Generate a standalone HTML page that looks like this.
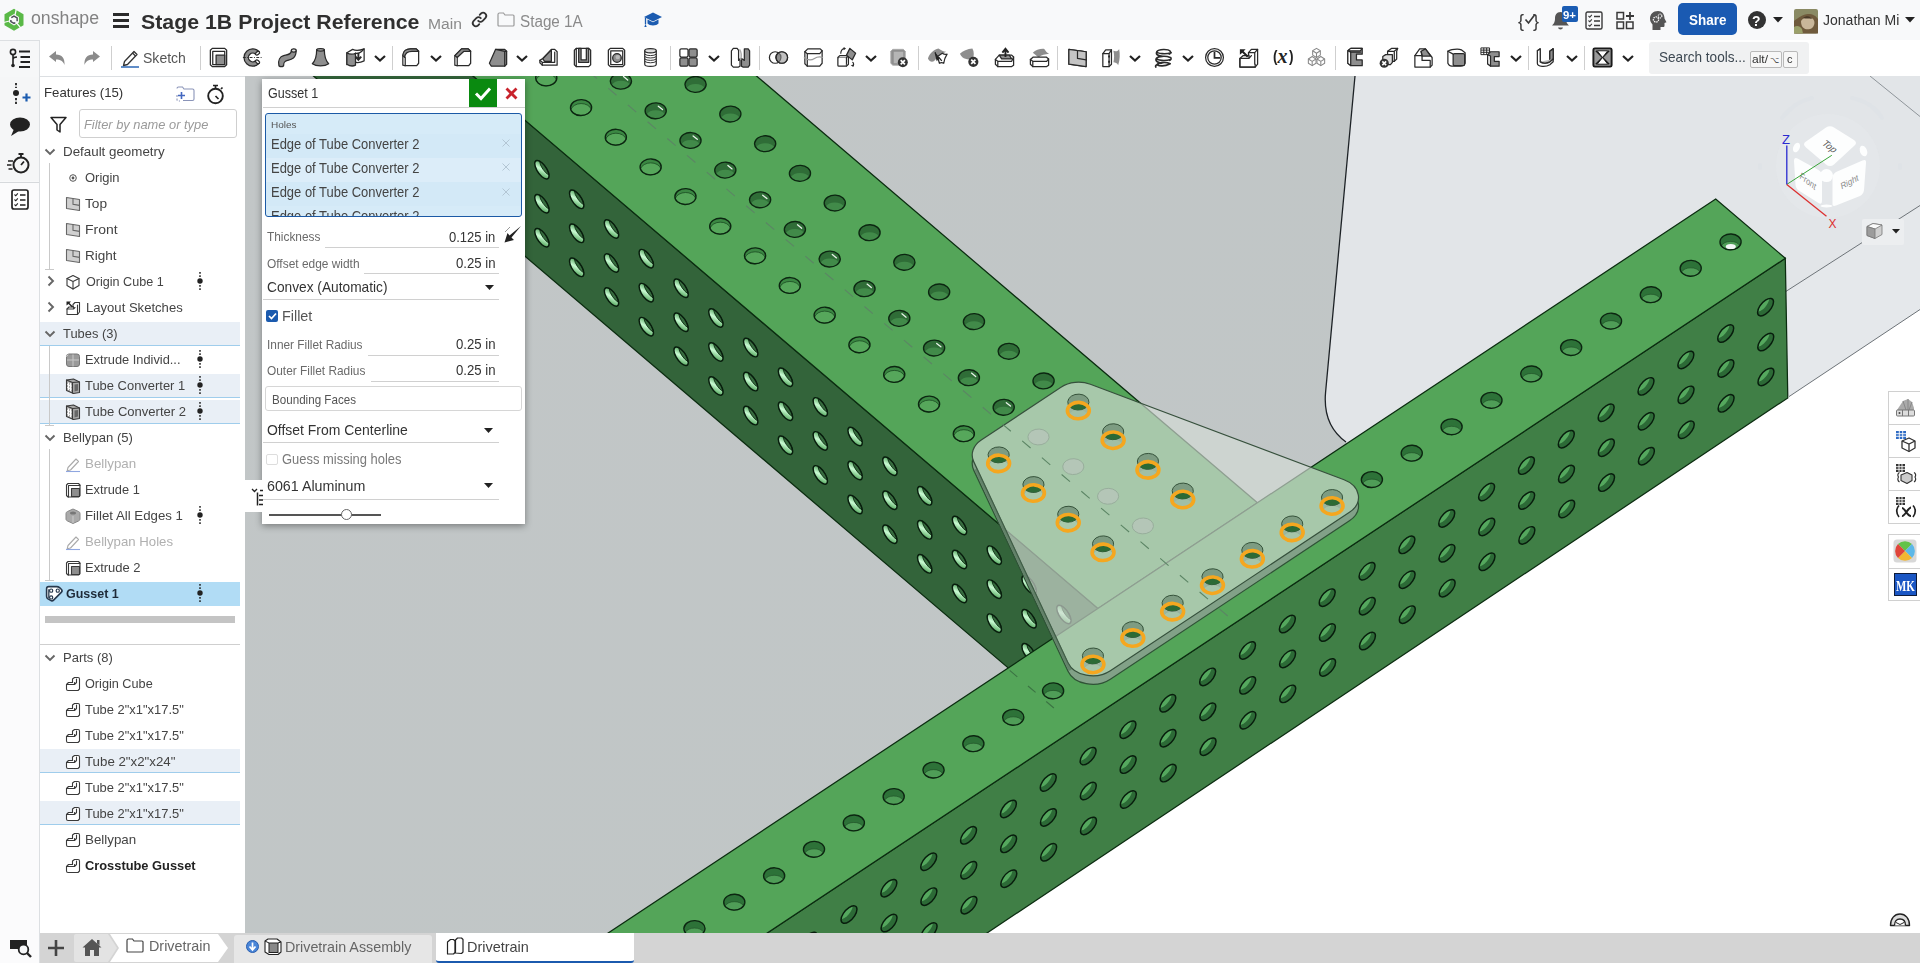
<!DOCTYPE html>
<html lang="en"><head><meta charset="utf-8"><title>Stage 1B Project Reference | Drivetrain - Onshape</title>
<style>*{box-sizing:border-box}
html,body{margin:0;padding:0}
body{width:1920px;height:963px;overflow:hidden;background:#fff;font-family:"Liberation Sans",sans-serif;font-size:13px;color:#333}
#app{position:relative;width:1920px;height:963px;overflow:hidden;background:#fff}
.t{position:absolute;white-space:nowrap;transform-origin:0 50%;display:block}
.abs,.ic{position:absolute;display:block}
svg{display:block;overflow:visible}
#viewport{position:absolute;left:245px;top:76px;width:1675px;height:857px;overflow:hidden;background:#c1c6c7}
#scene{position:absolute;left:0;top:0}
#scene circle,#scene path,#scene polygon,#scene ellipse{vector-effect:non-scaling-stroke}
#topbar{position:absolute;left:0;top:0;width:1920px;height:40px;background:#f8f9fa}
#toolbar{position:absolute;left:40px;top:40px;width:1880px;height:36px;background:#fff}
#toolbar .sep{position:absolute;top:6px;width:1px;height:24px;background:#cfcfcf}
#leftbar{position:absolute;left:0;top:40px;width:40px;height:923px;background:linear-gradient(#f5f6f7 0,#f5f6f7 141px,#fbfbfc 142px);border-right:1px solid #dcdfe2}
#leftbar .tab{position:absolute;left:0;top:0;width:40px;height:37px;background:#f6f7f8;border-top:1px solid #dcdfe2;border-right:1px solid #dcdfe2}
#features{position:absolute;left:40px;top:76px;width:205px;height:857px;border-top:1px solid #dcdfe2;background:#fff;overflow:hidden}
#features .row{position:absolute;left:0;width:200px;height:24px}
#features .hl{background:#e9eff6;border-bottom:1px solid #9fcdec}
#features .sel{background:#b1dcf5}
#dialog{position:absolute;left:262px;top:79px;width:263px;height:445px;background:#fff;box-shadow:0 2px 7px rgba(0,0,0,.38)}
#tabs{position:absolute;left:40px;top:933px;width:1880px;height:30px;background:#d4d4d4}
#rightbar{position:absolute;left:1888px;top:391px;width:32px}
.ul{position:absolute;height:1px;background:#d0d0d0}
</style></head><body>
<div id="app">
<main id="viewport"><svg id="scene" width="1675" height="857" viewBox="245 76 1675 857">
<defs>
<linearGradient id="gbg" x1="0" y1="0" x2="1" y2="1"><stop offset="0" stop-color="#c2c6c7"/><stop offset="1" stop-color="#c0c6c6"/></linearGradient>
<linearGradient id="gs1" x1=".2" y1="0" x2=".6" y2="1"><stop offset="0" stop-color="#489a51"/><stop offset=".5" stop-color="#c9fbd3"/><stop offset="1" stop-color="#55a85e"/></linearGradient>
<linearGradient id="gs2" x1="0" y1="1" x2="1" y2="0"><stop offset="0" stop-color="#5cb567"/><stop offset="1" stop-color="#35783f"/></linearGradient>
<g id="hA"><circle r="0.2" fill="#3b8843"/><path d="M0.165 0.114A0.2 0.2 0 0 1 -0.090 -0.178A0.2 0.2 0 0 1 0.165 0.114Z" fill="#56a75b" stroke="#1a4a22" stroke-width=".8"/><circle r="0.2" fill="none" stroke="#0c2611" stroke-width="1.35"/></g>
<g id="hB"><circle r="0.2" fill="#2f6d37"/><path d="M0.187 0.071A0.2 0.2 0 0 1 -0.045 -0.195A0.2 0.2 0 0 1 0.187 0.071Z" fill="#418a49"/><circle r="0.2" fill="none" stroke="#0c2611" stroke-width="1.35"/></g>
<g id="hC"><circle r="0.2" fill="#2d7238"/><path d="M0.187 0.071A0.2 0.2 0 0 1 -0.045 -0.195A0.2 0.2 0 0 1 0.187 0.071Z" fill="#4f9d57" stroke="#1d4a24" stroke-width=".6"/><circle r="0.2" fill="none" stroke="#0c2611" stroke-width="1.35"/></g>
<g id="hS"><circle r="0.206" fill="url(#gs1)"/><path d="M0.205 -0.018A0.206 0.206 0 0 1 -0.067 -0.195A0.206 0.206 0 0 1 0.205 -0.018Z" fill="#376c3f" stroke="#0a2a10" stroke-width=".9"/><circle r="0.206" fill="none" stroke="#081d0d" stroke-width="1.45"/></g>
<g id="hT"><circle r="0.2" fill="#2c6a36"/><path d="M0.095 -0.176A0.2 0.2 0 0 1 -0.200 -0.010A0.2 0.2 0 0 1 0.095 -0.176Z" fill="#55a85e"/><circle r="0.2" fill="none" stroke="#081d0d" stroke-width="1.45"/></g>
</defs>
<g stroke-width="1" style="vector-effect:non-scaling-stroke">
<rect x="245" y="76" width="1675" height="857" fill="#fff"/>
<path d="M245 76H1355L1325.600 392Q1322.500 425 1346 442L1400 460L683 933H245Z" fill="url(#gbg)"/>
<path d="M1355 76H1920V205.500L1785 292L1700 340L1400 460L1346 442Q1322.500 425 1325.600 392Z" fill="#e2e5e8"/>
<path d="M1920 205.500L1785 292L1700 345L1789 396.600L1920 309.500Z" fill="#e5e8eb"/>
<path d="M1920 205.500L1785 292M1789 396.600L1920 309.500" stroke="#6d7378" fill="none" stroke-width="1"/>
<path d="M1870 76L1920 116.500" stroke="#8f959a" fill="none" stroke-width="1"/>
<path d="M1355 76 L1325.600 392 Q1322.500 425 1346 442" stroke="#1d2226" fill="none" stroke-width="1.3"/>
<polygon points="158.4,-192.1 1098.0,608.4 1098.0,744.4 158.4,-56.1" fill="#33643a" stroke="#0b2c10" stroke-width="1.25"/>
<polygon points="158.4,-192.1 1098.0,608.4 1257.4,502.8 317.8,-297.8" fill="#54a559" stroke="#0b2c10" stroke-width="1.25"/>
<g transform="matrix(34.800 29.650 39.850 -26.410 541.20 134.00)" stroke-width="1">
<use href="#hA" x="-1" y="1"/>
<use href="#hA" x="0" y="1"/>
<use href="#hB" x="0" y="2"/>
<use href="#hA" x="1" y="1"/>
<use href="#hB" x="1" y="2"/>
<use href="#hB" x="1" y="3"/>
<use href="#hA" x="2" y="1"/>
<use href="#hB" x="2" y="2"/>
<use href="#hB" x="2" y="3"/>
<use href="#hA" x="3" y="1"/>
<use href="#hB" x="3" y="2"/>
<use href="#hB" x="3" y="3"/>
<use href="#hA" x="4" y="1"/>
<use href="#hB" x="4" y="2"/>
<use href="#hB" x="4" y="3"/>
<use href="#hA" x="5" y="1"/>
<use href="#hB" x="5" y="2"/>
<use href="#hB" x="5" y="3"/>
<use href="#hA" x="6" y="1"/>
<use href="#hB" x="6" y="2"/>
<use href="#hB" x="6" y="3"/>
<use href="#hA" x="7" y="1"/>
<use href="#hB" x="7" y="2"/>
<use href="#hB" x="7" y="3"/>
<use href="#hA" x="8" y="1"/>
<use href="#hB" x="8" y="2"/>
<use href="#hB" x="8" y="3"/>
<use href="#hA" x="9" y="1"/>
<use href="#hB" x="9" y="2"/>
<use href="#hB" x="9" y="3"/>
<use href="#hA" x="10" y="1"/>
<use href="#hB" x="10" y="2"/>
<use href="#hB" x="10" y="3"/>
<use href="#hA" x="11" y="1"/>
<use href="#hB" x="11" y="2"/>
<use href="#hB" x="11" y="3"/>
<use href="#hA" x="12" y="1"/>
<use href="#hB" x="12" y="3"/>
<use href="#hA" x="13" y="1"/>
<use href="#hB" x="13" y="3"/>
<use href="#hA" x="14" y="1"/>
<use href="#hB" x="14" y="3"/>
<use href="#hA" x="15" y="1"/>
<use href="#hB" x="15" y="3"/>
</g>
<path d="M623.5 76.6l4.200 3.400" stroke="#e9f3ea" stroke-width="1.300" fill="none" stroke-linecap="round"/>
<path d="M658.3 106.2l4.200 3.400" stroke="#e9f3ea" stroke-width="1.300" fill="none" stroke-linecap="round"/>
<path d="M693.1 135.9l4.200 3.400" stroke="#e9f3ea" stroke-width="1.300" fill="none" stroke-linecap="round"/>
<path d="M727.9 165.5l4.200 3.400" stroke="#e9f3ea" stroke-width="1.300" fill="none" stroke-linecap="round"/>
<path d="M762.7 195.2l4.200 3.400" stroke="#e9f3ea" stroke-width="1.300" fill="none" stroke-linecap="round"/>
<path d="M797.5 224.8l4.200 3.400" stroke="#e9f3ea" stroke-width="1.300" fill="none" stroke-linecap="round"/>
<path d="M832.3 254.5l4.200 3.400" stroke="#e9f3ea" stroke-width="1.300" fill="none" stroke-linecap="round"/>
<path d="M867.1 284.1l4.200 3.400" stroke="#e9f3ea" stroke-width="1.300" fill="none" stroke-linecap="round"/>
<path d="M901.9 313.8l4.200 3.400" stroke="#e9f3ea" stroke-width="1.300" fill="none" stroke-linecap="round"/>
<path d="M936.7 343.4l4.200 3.400" stroke="#e9f3ea" stroke-width="1.300" fill="none" stroke-linecap="round"/>
<path d="M971.5 373.1l4.200 3.400" stroke="#e9f3ea" stroke-width="1.300" fill="none" stroke-linecap="round"/>
<path d="M1006.3 402.7l4.200 3.400" stroke="#e9f3ea" stroke-width="1.300" fill="none" stroke-linecap="round"/>
<g transform="matrix(34.800 29.650 0.000 34.000 541.90 135.70)" stroke-width="1">
<use href="#hS" x="-1" y="1"/>
<use href="#hS" x="-1" y="2"/>
<use href="#hS" x="-1" y="3"/>
<use href="#hS" x="0" y="1"/>
<use href="#hS" x="0" y="2"/>
<use href="#hS" x="0" y="3"/>
<use href="#hS" x="1" y="1"/>
<use href="#hS" x="1" y="2"/>
<use href="#hS" x="1" y="3"/>
<use href="#hS" x="2" y="1"/>
<use href="#hS" x="2" y="2"/>
<use href="#hS" x="2" y="3"/>
<use href="#hS" x="3" y="1"/>
<use href="#hS" x="3" y="2"/>
<use href="#hS" x="3" y="3"/>
<use href="#hS" x="4" y="1"/>
<use href="#hS" x="4" y="2"/>
<use href="#hS" x="4" y="3"/>
<use href="#hS" x="5" y="1"/>
<use href="#hS" x="5" y="2"/>
<use href="#hS" x="5" y="3"/>
<use href="#hS" x="6" y="1"/>
<use href="#hS" x="6" y="2"/>
<use href="#hS" x="6" y="3"/>
<use href="#hS" x="7" y="1"/>
<use href="#hS" x="7" y="2"/>
<use href="#hS" x="7" y="3"/>
<use href="#hS" x="8" y="1"/>
<use href="#hS" x="8" y="2"/>
<use href="#hS" x="8" y="3"/>
<use href="#hS" x="9" y="1"/>
<use href="#hS" x="9" y="2"/>
<use href="#hS" x="9" y="3"/>
<use href="#hS" x="10" y="1"/>
<use href="#hS" x="10" y="2"/>
<use href="#hS" x="10" y="3"/>
<use href="#hS" x="11" y="1"/>
<use href="#hS" x="11" y="2"/>
<use href="#hS" x="11" y="3"/>
<use href="#hS" x="12" y="1"/>
<use href="#hS" x="12" y="2"/>
<use href="#hS" x="12" y="3"/>
<use href="#hS" x="13" y="1"/>
<use href="#hS" x="13" y="2"/>
<use href="#hS" x="13" y="3"/>
<use href="#hS" x="14" y="1"/>
<use href="#hS" x="14" y="2"/>
<use href="#hS" x="14" y="3"/>
<use href="#hS" x="15" y="1"/>
<use href="#hS" x="15" y="2"/>
<use href="#hS" x="15" y="3"/>
</g>
<polygon points="609.7,1037.4 1785.3,258.3 1787.8,397.9 612.2,1183.5" fill="#407f46" stroke="#0b2c10" stroke-width="1.25"/>
<polygon points="540.1,978.1 1715.7,199.0 1785.3,258.3 609.7,1037.4" fill="#54a559" stroke="#0b2c10" stroke-width="1.25"/>
<g transform="matrix(34.800 29.650 39.850 -26.410 541.20 134.00)" stroke-width="1">
<use href="#hC" x="17" y="-13"/>
<use href="#hC" x="17" y="-12"/>
<use href="#hC" x="17" y="-11"/>
<use href="#hC" x="17" y="-10"/>
<use href="#hC" x="17" y="-9"/>
<use href="#hC" x="17" y="-8"/>
<use href="#hC" x="17" y="-7"/>
<use href="#hC" x="17" y="-6"/>
<use href="#hC" x="17" y="-5"/>
<use href="#hC" x="17" y="-4"/>
<use href="#hC" x="17" y="-3"/>
<use href="#hC" x="17" y="-2"/>
<use href="#hC" x="17" y="-1"/>
<use href="#hC" x="17" y="0"/>
<use href="#hC" x="17" y="1"/>
<use href="#hC" x="17" y="2"/>
<use href="#hC" x="17" y="3"/>
<use href="#hC" x="17" y="4"/>
<use href="#hC" x="17" y="5"/>
<use href="#hC" x="17" y="6"/>
<use href="#hC" x="17" y="7"/>
<use href="#hC" x="17" y="8"/>
<use href="#hC" x="17" y="9"/>
<use href="#hC" x="17" y="10"/>
<use href="#hC" x="17" y="11"/>
<use href="#hC" x="17" y="12"/>
<use href="#hC" x="17" y="13"/>
<use href="#hC" x="17" y="14"/>
<use href="#hC" x="17" y="15"/>
</g>
<ellipse cx="1730.8" cy="246.5" rx="5" ry="2.600" fill="#f4f6f7"/>
<g transform="matrix(39.850 -26.410 0.200 34.900 1167.60 668.40)" stroke-width="1">
<use href="#hT" x="-13" y="1"/>
<use href="#hT" x="-13" y="2"/>
<use href="#hT" x="-13" y="3"/>
<use href="#hT" x="-12" y="1"/>
<use href="#hT" x="-12" y="2"/>
<use href="#hT" x="-12" y="3"/>
<use href="#hT" x="-11" y="1"/>
<use href="#hT" x="-11" y="2"/>
<use href="#hT" x="-11" y="3"/>
<use href="#hT" x="-10" y="1"/>
<use href="#hT" x="-10" y="2"/>
<use href="#hT" x="-10" y="3"/>
<use href="#hT" x="-9" y="1"/>
<use href="#hT" x="-9" y="2"/>
<use href="#hT" x="-9" y="3"/>
<use href="#hT" x="-8" y="1"/>
<use href="#hT" x="-8" y="2"/>
<use href="#hT" x="-8" y="3"/>
<use href="#hT" x="-7" y="1"/>
<use href="#hT" x="-7" y="2"/>
<use href="#hT" x="-7" y="3"/>
<use href="#hT" x="-6" y="1"/>
<use href="#hT" x="-6" y="2"/>
<use href="#hT" x="-6" y="3"/>
<use href="#hT" x="-5" y="1"/>
<use href="#hT" x="-5" y="2"/>
<use href="#hT" x="-5" y="3"/>
<use href="#hT" x="-4" y="1"/>
<use href="#hT" x="-4" y="2"/>
<use href="#hT" x="-4" y="3"/>
<use href="#hT" x="-3" y="1"/>
<use href="#hT" x="-3" y="2"/>
<use href="#hT" x="-3" y="3"/>
<use href="#hT" x="-2" y="1"/>
<use href="#hT" x="-2" y="2"/>
<use href="#hT" x="-2" y="3"/>
<use href="#hT" x="-1" y="1"/>
<use href="#hT" x="-1" y="2"/>
<use href="#hT" x="-1" y="3"/>
<use href="#hT" x="0" y="1"/>
<use href="#hT" x="0" y="2"/>
<use href="#hT" x="0" y="3"/>
<use href="#hT" x="1" y="1"/>
<use href="#hT" x="1" y="2"/>
<use href="#hT" x="1" y="3"/>
<use href="#hT" x="2" y="1"/>
<use href="#hT" x="2" y="2"/>
<use href="#hT" x="2" y="3"/>
<use href="#hT" x="3" y="1"/>
<use href="#hT" x="3" y="2"/>
<use href="#hT" x="3" y="3"/>
<use href="#hT" x="4" y="1"/>
<use href="#hT" x="4" y="2"/>
<use href="#hT" x="4" y="3"/>
<use href="#hT" x="5" y="1"/>
<use href="#hT" x="5" y="2"/>
<use href="#hT" x="5" y="3"/>
<use href="#hT" x="6" y="1"/>
<use href="#hT" x="6" y="2"/>
<use href="#hT" x="6" y="3"/>
<use href="#hT" x="7" y="1"/>
<use href="#hT" x="7" y="2"/>
<use href="#hT" x="7" y="3"/>
<use href="#hT" x="8" y="1"/>
<use href="#hT" x="8" y="2"/>
<use href="#hT" x="8" y="3"/>
<use href="#hT" x="9" y="1"/>
<use href="#hT" x="9" y="2"/>
<use href="#hT" x="9" y="3"/>
<use href="#hT" x="10" y="1"/>
<use href="#hT" x="10" y="2"/>
<use href="#hT" x="10" y="3"/>
<use href="#hT" x="11" y="1"/>
<use href="#hT" x="11" y="2"/>
<use href="#hT" x="11" y="3"/>
<use href="#hT" x="12" y="1"/>
<use href="#hT" x="12" y="2"/>
<use href="#hT" x="12" y="3"/>
<use href="#hT" x="13" y="1"/>
<use href="#hT" x="13" y="2"/>
<use href="#hT" x="13" y="3"/>
<use href="#hT" x="14" y="1"/>
<use href="#hT" x="14" y="2"/>
<use href="#hT" x="14" y="3"/>
<use href="#hT" x="15" y="1"/>
<use href="#hT" x="15" y="2"/>
<use href="#hT" x="15" y="3"/>
</g>
<line x1="1009.7" y1="670.4" x2="1058.4" y2="711.9" stroke="#3b7343" stroke-width="1.1" stroke-dasharray="10 14"/>
<mask id="gm" maskUnits="userSpaceOnUse" x="900" y="300" width="600" height="450"><rect x="900" y="300" width="600" height="450" fill="#fff"/><g transform="matrix(34.800 29.650 39.850 -26.410 541.20 125.50)"><path d="M11.500 1.000L11.500 3.000A0.5 0.5 0 0 0 11.814 3.464L16.814 5.464A0.5 0.5 0 0 0 17.500 5.000L17.500 -1.000A0.5 0.5 0 0 0 16.814 -1.464L11.814 0.536A0.5 0.5 0 0 0 11.500 1.000Z" fill="#000"/></g></mask>
<g mask="url(#gm)"><g transform="matrix(34.800 29.650 39.850 -26.410 541.20 134.00)"><path d="M11.500 1.000L11.500 3.000A0.5 0.5 0 0 0 11.814 3.464L16.814 5.464A0.5 0.5 0 0 0 17.500 5.000L17.500 -1.000A0.5 0.5 0 0 0 16.814 -1.464L11.814 0.536A0.5 0.5 0 0 0 11.500 1.000Z" fill="#87a18c" fill-opacity=".92" stroke="#2f5236" stroke-width="1.2"/></g></g>
<g transform="matrix(34.800 29.650 39.850 -26.410 541.20 125.50)"><path d="M11.500 1.000L11.500 3.000A0.5 0.5 0 0 0 11.814 3.464L16.814 5.464A0.5 0.5 0 0 0 17.500 5.000L17.500 -1.000A0.5 0.5 0 0 0 16.814 -1.464L11.814 0.536A0.5 0.5 0 0 0 11.500 1.000Z" fill="#d3dbd5" fill-opacity=".66" stroke="#36503c" stroke-width="1.2"/></g>
<line x1="975.9" y1="469.1" x2="1070.2" y2="670.2" stroke="#4b6b52" stroke-opacity=".55" stroke-width="3.200"/>
<g transform="matrix(34.800 29.650 39.850 -26.410 541.20 134.00)" stroke-width="1">
<circle cx="12" cy="2" r="0.2" fill="#b4c6b7" stroke="#98ae9c"/>
<circle cx="13" cy="2" r="0.2" fill="#b4c6b7" stroke="#98ae9c"/>
<circle cx="14" cy="2" r="0.2" fill="#b4c6b7" stroke="#98ae9c"/>
<circle cx="15" cy="2" r="0.2" fill="#b4c6b7" stroke="#98ae9c"/>
</g>
<line x1="551.3" y1="39.7" x2="1236.9" y2="623.8" stroke="#5c8565" stroke-width="1.1" stroke-dasharray="11 14.900" stroke-dashoffset="3"/>
<g transform="matrix(34.800 29.650 39.850 -26.410 541.20 125.50)" stroke-width="1">
<defs><g id="hG"><circle r="0.2" fill="#7d9c82" stroke="#35523a"/><path d="M0.192 0.057A0.2 0.2 0 0 1 -0.030 -0.198A0.2 0.2 0 0 1 0.192 0.057Z" fill="#2c6a35"/></g></defs>
<use href="#hG" x="12" y="1"/>
<use href="#hG" x="13" y="1"/>
<use href="#hG" x="14" y="1"/>
<use href="#hG" x="15" y="1"/>
<use href="#hG" x="12" y="3"/>
<use href="#hG" x="13" y="3"/>
<use href="#hG" x="14" y="3"/>
<use href="#hG" x="15" y="3"/>
<use href="#hG" x="17" y="-1"/>
<use href="#hG" x="17" y="0"/>
<use href="#hG" x="17" y="1"/>
<use href="#hG" x="17" y="2"/>
<use href="#hG" x="17" y="3"/>
<use href="#hG" x="17" y="4"/>
<use href="#hG" x="17" y="5"/>
</g>
<g transform="matrix(34.800 29.650 39.850 -26.410 541.20 134.00)" fill="none" stroke="#f5a71f" stroke-width="3.6">
<circle cx="12" cy="1" r=".207"/>
<circle cx="13" cy="1" r=".207"/>
<circle cx="14" cy="1" r=".207"/>
<circle cx="15" cy="1" r=".207"/>
<circle cx="12" cy="3" r=".207"/>
<circle cx="13" cy="3" r=".207"/>
<circle cx="14" cy="3" r=".207"/>
<circle cx="15" cy="3" r=".207"/>
<circle cx="17" cy="-1" r=".207"/>
<circle cx="17" cy="0" r=".207"/>
<circle cx="17" cy="1" r=".207"/>
<circle cx="17" cy="2" r=".207"/>
<circle cx="17" cy="3" r=".207"/>
<circle cx="17" cy="4" r=".207"/>
<circle cx="17" cy="5" r=".207"/>
</g>
</g>
</svg><svg id="cube" class="abs" style="left:1485px;top:4px" width="190" height="180" viewBox="1730 80 190 180">
<g fill="none" stroke="#dfe3e7" stroke-width="4" stroke-linecap="round"><path d="M1782 118q12-16 30-20"/><path d="M1852 98q20 4 30 20"/><path d="M1760 165l0 3M1900 165l0 3"/></g>
<circle cx="1828" cy="166" r="52" fill="#e9ecef" fill-opacity=".35"/>
<path d="M1826 127.500q4-2.500 8 0l20 12.500q4 3 0 6l-20 18.500q-4 3-8 0l-20-17q-4-3.500 0-6z" fill="#fdfefe"/>
<path d="M1794 161q0-4 3.500-2.500l21 11.500q3.500 2 3.500 6v25q0 4-3.500 2l-19-12q-3.500-2-4-6z" fill="#fdfefe"/>
<path d="M1832.500 178q0-4 3.500-6l26.500-11.500q4-1.500 3.500 2.500l-2 27q-.5 4-4 6l-24 9.500q-4 1.500-3.500-2.500z" fill="#fdfefe"/>
<circle cx="1826.500" cy="175.600" r="6.500" fill="#fdfefe"/><ellipse cx="1796.500" cy="147.500" rx="3.200" ry="5" transform="rotate(25 1796.500 147.500)" fill="#fdfefe"/><ellipse cx="1863.500" cy="151" rx="3.500" ry="5.500" transform="rotate(-20 1863.500 151)" fill="#fdfefe"/><ellipse cx="1826.500" cy="206" rx="6" ry="1.500" fill="#fdfefe"/>
<text font-family="Liberation Sans,sans-serif" font-size="9.500" fill="#555" text-anchor="middle" transform="translate(1830 146.500) rotate(36) skewX(-18)" y="3.300">Top</text>
<text font-family="Liberation Sans,sans-serif" font-size="8.500" fill="#8a8a8a" text-anchor="middle" transform="translate(1808 181) rotate(38) skewX(20)" y="3">Front</text>
<text font-family="Liberation Sans,sans-serif" font-size="8.500" fill="#8a8a8a" text-anchor="middle" transform="translate(1849.500 181.800) rotate(-28) skewX(-16)" y="3">Right</text>
<path d="M1786.800 184.400L1831.800 155.300" stroke="#3aa53a" stroke-width="1"/>
<path d="M1786.800 184.400V145.600" stroke="#2a2ad0" stroke-width="1.300"/>
<path d="M1786.800 184.400L1826.500 216.200" stroke="#dc3030" stroke-width="1.300"/>
<text x="1782" y="144" font-family="Liberation Sans,sans-serif" font-size="12.500" fill="#2a2ad0" textLength="8" lengthAdjust="spacingAndGlyphs">Z</text>
<text x="1828.500" y="228" font-family="Liberation Sans,sans-serif" font-size="12.500" fill="#dc3030" textLength="8" lengthAdjust="spacingAndGlyphs">X</text>
<rect x="1862" y="219" width="42" height="26" rx="2" fill="#eceef0"/>
<path d="M1867 226.500l6-3 9 1.500v9.500l-7 4-8-3z" fill="#cfcfcf" stroke="#777" stroke-width=".8" stroke-linejoin="round"/><path d="M1867 226.500l8 2.500 7-4-9-1.500z" fill="#fafafa" stroke="#777" stroke-width=".8" stroke-linejoin="round"/><path d="M1875 229v9.500l-8-3v-9z" fill="#9c9c9c" stroke="#777" stroke-width=".8" stroke-linejoin="round"/>
<path d="M1892 229h8l-4 4.500z" fill="#222"/>
</svg></main>
<header id="topbar">
<svg class="ic" style="left:3.4px;top:8.1px" width="22" height="23.5" viewBox="0 0 22 24"><path d="M11 .8l9.700 5.600v11.200L11 23.200 1.300 17.600V6.400z" fill="#5ab947"/><path d="M11 6.200l5 2.900v5.800L11 17.800l-5-2.900V9.100z" fill="#fbfbfb"/><path d="M11 12L13.500 .5M11 12L.5 14.800M11 12l7.500 9" stroke="#fbfbfb" stroke-width="1.300"/><path d="M11 8.300l3.200 1.850v3.700L11 15.700l-3.200-1.850v-3.700z" fill="#fbfbfb" stroke="#4a4f55" stroke-width="1.500" stroke-dasharray="7 2.500"/></svg>
<span class="t" style="left:31.3px;top:7.4px;font-size:17.5px;line-height:23px;color:#828282;transform:scaleX(1.013);">onshape</span>
<svg class="ic" style="left:112.0px;top:12.0px" width="18" height="17" viewBox="0 0 18 17"><path d="M1 2.500h16M1 8.500h16M1 14.500h16" stroke="#2b2b2b" stroke-width="3"/></svg>
<span class="t" style="left:140.8px;top:7.7px;font-size:20.5px;line-height:27px;color:#2f2f2f;font-weight:700;transform:scaleX(1.040);">Stage 1B Project Reference</span>
<span class="t" style="left:427.5px;top:13.7px;font-size:15.5px;line-height:20px;color:#8a8a8a;transform:scaleX(1.010);">Main</span>
<svg class="ic" style="left:471.0px;top:11.0px" width="17" height="17" viewBox="0 0 17 17"><g fill="none" stroke="#333" stroke-width="1.800" stroke-linecap="round"><path d="M7.200 9.800a3.200 3.200 0 0 0 4.500 0l2.800-2.800a3.200 3.200 0 0 0-4.500-4.500l-1.300 1.300"/><path d="M9.800 7.200a3.200 3.200 0 0 0-4.500 0L2.500 10a3.200 3.200 0 0 0 4.500 4.500l1.300-1.300"/></g></svg>
<svg class="ic" style="left:497.0px;top:12.0px" width="18" height="15" viewBox="0 0 18 15"><path d="M1 2.500q0-1.500 1.500-1.500h4l1.500 2h8q1 0 1 1v9q0 1-1 1H2q-1 0-1-1z" fill="none" stroke="#9a9a9a" stroke-width="1.200"/></svg>
<span class="t" style="left:519.6px;top:10.9px;font-size:16px;line-height:21px;color:#8a8a8a;transform:scaleX(0.953);">Stage 1A</span>
<svg class="ic" style="left:643.0px;top:11.0px" width="20" height="17" viewBox="0 0 20 17"><path d="M10 1.500l9 4.500-9 4.500L1 6z" fill="#1c5cb0"/><path d="M4.500 8.500v4c2 2.500 9 2.500 11 0v-4L10 11.300z" fill="#1c5cb0"/><path d="M2.500 6.800v6.500" stroke="#1c5cb0" stroke-width="1.300"/><path d="M1.300 16l1.200-3 1.200 3z" fill="#1c5cb0"/></svg>
<span class="t" style="left:1517.9px;top:7.6px;font-size:19px;line-height:25px;color:#3a3a3a;transform:scaleX(0.946);">{</span>
<span class="t" style="left:1533.4px;top:7.6px;font-size:19px;line-height:25px;color:#3a3a3a;transform:scaleX(0.946);">}</span>
<svg class="ic" style="left:1523.5px;top:13.0px" width="12" height="12" viewBox="0 0 12 12"><path d="M1.500 6.500l3 3.500 6-8" fill="none" stroke="#3a3a3a" stroke-width="1.700"/></svg>
<svg class="ic" style="left:1551.0px;top:10.0px" width="19" height="21" viewBox="0 0 19 21"><path d="M9.500 2c-4 0-5.500 3-5.500 6.500 0 4-1.500 5.500-3 7h17c-1.500-1.500-3-3-3-7C15 5 13.500 2 9.500 2z" fill="#555"/><path d="M7 17.500c.5 2.500 4.500 2.500 5 0z" fill="#555"/></svg>
<span class="abs" style="left:1562px;top:6px;width:16px;height:16px;background:#1b5db3;border-radius:2px"></span>
<span class="t" style="left:1562.8px;top:8.2px;font-size:11px;line-height:14px;color:#fff;font-weight:700;transform:scaleX(1.037);">9+</span>
<svg class="ic" style="left:1585.0px;top:11.0px" width="18" height="19" viewBox="0 0 18 19"><rect x="1" y="1" width="16" height="17" rx="1.500" fill="none" stroke="#3a3a3a" stroke-width="1.400"/><path d="M3.500 5l1.300 1.300 2-2.500M3.500 9.500l1.300 1.300 2-2.500M3.500 14l1.300 1.300 2-2.500" fill="none" stroke="#3a3a3a" stroke-width="1.100"/><path d="M9 5.500h6M9 10h6M9 14.500h6" stroke="#3a3a3a" stroke-width="1.400"/></svg>
<svg class="ic" style="left:1616.0px;top:11.0px" width="20" height="19" viewBox="0 0 20 19"><g fill="none" stroke="#3a3a3a" stroke-width="1.500"><rect x="1" y="1.500" width="6.500" height="6.500"/><rect x="1" y="11" width="6.500" height="6.500"/><rect x="10.500" y="11" width="6.500" height="6.500"/><path d="M14 1v8M10 5h8" stroke-width="1.800"/></g></svg>
<svg class="ic" style="left:1648.0px;top:10.0px" width="20" height="21" viewBox="0 0 20 21"><path d="M10 1C5 1 2 4.500 2 8.500c0 3 1.200 4.500 2.500 6V20h8v-3h2.500c1 0 1.500-.5 1.500-1.500V13l2-.8-2-3.700C16.500 4 14 1 10 1z" fill="#555"/><circle cx="8" cy="9.500" r="2.600" fill="none" stroke="#fff" stroke-width="1.300" stroke-dasharray="1.400 .9"/><circle cx="12" cy="6" r="1.900" fill="none" stroke="#fff" stroke-width="1.100" stroke-dasharray="1.100 .8"/></svg>
<span class="abs" style="left:1678px;top:3px;width:59px;height:32px;background:#1a5ab2;border-radius:5px"></span>
<span class="t" style="left:1688.5px;top:10.3px;font-size:15.5px;line-height:20px;color:#fff;font-weight:700;transform:scaleX(0.867);">Share</span>
<svg class="ic" style="left:1747.0px;top:10.0px" width="20" height="20" viewBox="0 0 20 20"><circle cx="10" cy="10" r="9" fill="#333"/></svg>
<span class="t" style="left:1751.7px;top:10.6px;font-size:15.5px;line-height:20px;color:#fff;font-weight:700;transform:scaleX(0.898);">?</span>
<svg class="ic" style="left:1773.0px;top:17.0px" width="10" height="6" viewBox="0 0 10 6"><path d="M0 0h10L5 5.500z" fill="#222"/></svg>
<svg class="ic" style="left:1794.0px;top:8.5px" width="24" height="24.5" viewBox="0 0 24 24.5"><rect width="24" height="24.500" rx="2" fill="#8a8a64"/><path d="M0 12c4-3 9-7 14-7s8 2 10 5v14.500H0z" fill="#6f5a3c"/><path d="M7 12c2-4 9-5 12-2s1 9-3 10-9 0-9-8z" fill="#c9b79a"/><path d="M9 9c3-3 8-2 9 1-3-1-6 0-9-1z" fill="#4a3a28"/><path d="M0 18c3-2 6-1 8 2l1 4.500H0z" fill="#9aa06a"/></svg>
<span class="t" style="left:1822.9px;top:10.3px;font-size:15.5px;line-height:20px;color:#333;transform:scaleX(0.904);">Jonathan Mi</span>
<svg class="ic" style="left:1905.0px;top:17.0px" width="10" height="6" viewBox="0 0 10 6"><path d="M0 0h10L5 5.500z" fill="#222"/></svg>
</header>
<div id="toolbar">
<svg class="ic" style="left:8.0px;top:9.0px" width="18" height="18" viewBox="0 0 18 18"><path d="M1 7.500L8 2v3.500c6 0 9 4 8.500 10.500-1.500-4-4-5.500-8.500-5.500V13z" fill="#8b8b8b"/></svg>
<svg class="ic" style="left:43.0px;top:9.0px" width="18" height="18" viewBox="0 0 18 18"><path d="M17 7.500L10 2v3.500c-6 0-9 4-8.500 10.500C3 12 5.500 10.500 10 10.500V13z" fill="#8b8b8b"/></svg>
<i class="sep" style="left:71.2px"></i>
<svg class="ic" style="left:81.0px;top:8.0px" width="20" height="20" viewBox="0 0 20 20"><path d="M3.500 13.500l9.500-10 3 3-9.500 10-4 1z" fill="#fff" stroke="#333" stroke-width="1.300" stroke-linejoin="round"/><path d="M11.500 5l3 3" stroke="#333" stroke-width="1.200"/><path d="M0 19h18" stroke="#1c5cb0" stroke-width="1.400"/></svg>
<span class="t" style="left:103.3px;top:8.1px;font-size:15.5px;line-height:20px;color:#555;transform:scaleX(0.906);">Sketch</span>
<i class="sep" style="left:159.8px"></i>
<svg class="ic" style="left:167.2px;top:6.3px" width="23" height="23" viewBox="0 0 24 24"><path d="M3.5 4.5l2-2h13l2 2v15l-2 2h-13l-2-2z" fill="#fff" stroke="#2a2a2a" stroke-width="1.3" stroke-linejoin="round" stroke-linecap="round"/><path d="M6 5.5h12.5v14H6z" fill="#fff" stroke="#2a2a2a" stroke-width="1.3" stroke-linejoin="round" stroke-linecap="round"/><rect x="9.5" y="9.5" width="9" height="10" fill="#8e8e8e" stroke="#2a2a2a" stroke-width="1.3" stroke-linejoin="round" stroke-linecap="round"/></svg>
<svg class="ic" style="left:201.1px;top:6.3px" width="23" height="23" viewBox="0 0 24 24"><path d="M19 6.2A9 9 0 1 0 19 17.8l-3.6-2.6a4.5 4.5 0 1 1 0-6.4z" fill="#8e8e8e" stroke="#2a2a2a" stroke-width="1.3" stroke-linejoin="round" stroke-linecap="round"/><ellipse cx="17.3" cy="7.5" rx="2.4" ry="1.5" transform="rotate(-38 17.3 7.5)" fill="#fff" stroke="#2a2a2a" stroke-width="1.3" stroke-linejoin="round" stroke-linecap="round"/><ellipse cx="17.3" cy="16.5" rx="2.4" ry="1.5" transform="rotate(38 17.3 16.5)" fill="#fff" stroke="#2a2a2a" stroke-width="1.3" stroke-linejoin="round" stroke-linecap="round"/><path d="M2 12h20" stroke="#2a2a2a" stroke-width="1" stroke-dasharray="3 1.5 1 1.5" fill="none"/></svg>
<svg class="ic" style="left:235.8px;top:6.3px" width="23" height="23" viewBox="0 0 24 24"><path d="M3 20c-1-5 1-9 5-10s8-1 8-5c0-2 5-2 5 0 0 8-5 9-9 10s-4 3-4 5c0 2-5 2-5 0z" fill="#8e8e8e" stroke="#2a2a2a" stroke-width="1.3" stroke-linejoin="round" stroke-linecap="round"/><ellipse cx="18.5" cy="4.6" rx="2.5" ry="1.7" fill="#ddd" stroke="#2a2a2a" stroke-width="1.3" stroke-linejoin="round" stroke-linecap="round"/></svg>
<svg class="ic" style="left:269.3px;top:6.3px" width="23" height="23" viewBox="0 0 24 24"><path d="M8 4c2-1.4 6-1.4 8 0 0 6 1 11 4.5 14.500-4 3-13 3-17 0C7 15 8 10 8 4z" fill="#8e8e8e" stroke="#2a2a2a" stroke-width="1.3" stroke-linejoin="round" stroke-linecap="round"/><ellipse cx="12" cy="4" rx="4" ry="1.3" fill="#bbb" stroke="#2a2a2a" stroke-width="1.3" stroke-linejoin="round" stroke-linecap="round"/></svg>
<svg class="ic" style="left:303.9px;top:6.3px" width="23" height="23" viewBox="0 0 24 24"><path d="M3 7l6-3.500c4 2 8 1 12-.5v12.500c-4 2-8 2.500-12 .5l-6 3.500z" fill="#fff" stroke="#2a2a2a" stroke-width="1.3" stroke-linejoin="round" stroke-linecap="round"/><path d="M3 7c3 2 6 2 9 .5v12.500c-3 1.500-6 1-9-1z" fill="#8e8e8e" stroke="#2a2a2a" stroke-width="1.3" stroke-linejoin="round" stroke-linecap="round"/><path d="M12 7.500c4 .8 6-1 9-4.500" fill="none" stroke="#2a2a2a" stroke-width="1.3" stroke-linejoin="round" stroke-linecap="round"/><path d="M15 7v7m-3-3l3 3.500 3-3.500" fill="none" stroke="#2a2a2a" stroke-width="2"/></svg>
<svg class="ic" style="left:332.9px;top:12.0px" width="14" height="12" viewBox="0 0 14 12"><path d="M2 4l5 4.500L12 4" fill="none" stroke="#222" stroke-width="2.200"/></svg>
<i class="sep" style="left:351.9px"></i>
<svg class="ic" style="left:359.4px;top:6.3px" width="23" height="23" viewBox="0 0 24 24"><path d="M4 20V10c0-5 4-7 8-7h6l2.500 2.500V18l-2 2.500H6z" fill="#fff" stroke="#2a2a2a" stroke-width="1.3" stroke-linejoin="round" stroke-linecap="round"/><path d="M4 10c0-5 4-7 8-7h6l2.500 2.500h-7c-4 0-7.500 2-7.500 6.500z" fill="#8e8e8e" stroke="#2a2a2a" stroke-width="1.3" stroke-linejoin="round" stroke-linecap="round"/><path d="M6.500 20.500V12M20.500 5.500" fill="none" stroke="#2a2a2a" stroke-width="1.3" stroke-linejoin="round" stroke-linecap="round"/></svg>
<svg class="ic" style="left:388.7px;top:12.0px" width="14" height="12" viewBox="0 0 14 12"><path d="M2 4l5 4.500L12 4" fill="none" stroke="#222" stroke-width="2.200"/></svg>
<svg class="ic" style="left:410.8px;top:6.3px" width="23" height="23" viewBox="0 0 24 24"><path d="M4 20V10l7-7h7l2.500 2.500V18l-2 2.500H6z" fill="#fff" stroke="#2a2a2a" stroke-width="1.3" stroke-linejoin="round" stroke-linecap="round"/><path d="M4 10l7-7h7l2.500 2.500h-7L6.500 12z" fill="#8e8e8e" stroke="#2a2a2a" stroke-width="1.3" stroke-linejoin="round" stroke-linecap="round"/><path d="M6.500 20.500V12" fill="none" stroke="#2a2a2a" stroke-width="1.3" stroke-linejoin="round" stroke-linecap="round"/></svg>
<svg class="ic" style="left:447.2px;top:6.3px" width="23" height="23" viewBox="0 0 24 24"><path d="M2.500 18L9 3.500h9.500l2 2V19l-2 2h-14z" fill="#8e8e8e" stroke="#2a2a2a" stroke-width="1.3" stroke-linejoin="round" stroke-linecap="round"/><path d="M18.500 21V5.500L9 3.500M18.500 5.500h2" fill="none" stroke="#2a2a2a" stroke-width="1.3" stroke-linejoin="round" stroke-linecap="round"/></svg>
<svg class="ic" style="left:475.0px;top:12.0px" width="14" height="12" viewBox="0 0 14 12"><path d="M2 4l5 4.500L12 4" fill="none" stroke="#222" stroke-width="2.200"/></svg>
<svg class="ic" style="left:497.2px;top:6.3px" width="23" height="23" viewBox="0 0 24 24"><path d="M3 15l3-2 9-9.500h3.500l2.500 2.500v14H5.500L3 17.500z" fill="#fff" stroke="#2a2a2a" stroke-width="1.3" stroke-linejoin="round" stroke-linecap="round"/><path d="M6 13.500l9-9.500v12H8z" fill="#8e8e8e" stroke="#2a2a2a" stroke-width="1.3" stroke-linejoin="round" stroke-linecap="round"/><path d="M3 15l2.500 2h13V6.500M5.500 17v3" fill="none" stroke="#2a2a2a" stroke-width="1.3" stroke-linejoin="round" stroke-linecap="round"/></svg>
<svg class="ic" style="left:530.7px;top:6.3px" width="23" height="23" viewBox="0 0 24 24"><path d="M3.500 4.500l2-2h13l2 2v15l-2 2h-13l-2-2z" fill="#fff" stroke="#2a2a2a" stroke-width="1.3" stroke-linejoin="round" stroke-linecap="round"/><path d="M8 2.500v14.500h10.500V2.500h-2.500v12h-5.500v-12z" fill="#8e8e8e" stroke="#2a2a2a" stroke-width="1.3" stroke-linejoin="round" stroke-linecap="round"/><path d="M5.500 2.500v19" fill="none" stroke="#2a2a2a" stroke-width="1.3" stroke-linejoin="round" stroke-linecap="round"/></svg>
<svg class="ic" style="left:564.6px;top:6.3px" width="23" height="23" viewBox="0 0 24 24"><path d="M3.500 4.500l2-2h13l2 2v15l-2 2h-13l-2-2z" fill="#fff" stroke="#2a2a2a" stroke-width="1.3" stroke-linejoin="round" stroke-linecap="round"/><path d="M6 5h12.500v14.500H6z" fill="#fff" stroke="#2a2a2a" stroke-width="1.3" stroke-linejoin="round" stroke-linecap="round"/><circle cx="12.500" cy="12.500" r="4.500" fill="#8e8e8e" stroke="#2a2a2a" stroke-width="1.3" stroke-linejoin="round" stroke-linecap="round"/><circle cx="13.300" cy="11.600" r="2.300" fill="#bbb"/></svg>
<svg class="ic" style="left:599.2px;top:6.3px" width="23" height="23" viewBox="0 0 24 24"><path d="M6 5v14c0 3 12 3 12 0V5z" fill="#fff" stroke="#2a2a2a" stroke-width="1.3" stroke-linejoin="round" stroke-linecap="round"/><ellipse cx="12" cy="5" rx="6" ry="2.200" fill="#ddd" stroke="#2a2a2a" stroke-width="1.3" stroke-linejoin="round" stroke-linecap="round"/><path d="M6 8.500c2 2 10 2 12 0M6 11c2 2 10 2 12 0M6 13.500c2 2 10 2 12 0M6 16c2 2 10 2 12 0" fill="none" stroke="#2a2a2a" stroke-width="1"/></svg>
<i class="sep" style="left:629.5px"></i>
<svg class="ic" style="left:636.9px;top:6.3px" width="23" height="23" viewBox="0 0 24 24"><rect x="3" y="3" width="8.500" height="8.500" rx="1.500" fill="#fff" stroke="#2a2a2a" stroke-width="1.3" stroke-linejoin="round" stroke-linecap="round"/><rect x="12.500" y="3" width="8.500" height="8.500" rx="1.500" fill="#8e8e8e" stroke="#2a2a2a" stroke-width="1.3" stroke-linejoin="round" stroke-linecap="round"/><rect x="3" y="12.500" width="8.500" height="8.500" rx="1.500" fill="#8e8e8e" stroke="#2a2a2a" stroke-width="1.3" stroke-linejoin="round" stroke-linecap="round"/><rect x="12.500" y="12.500" width="8.500" height="8.500" rx="1.500" fill="#8e8e8e" stroke="#2a2a2a" stroke-width="1.3" stroke-linejoin="round" stroke-linecap="round"/></svg>
<svg class="ic" style="left:667.0px;top:12.0px" width="14" height="12" viewBox="0 0 14 12"><path d="M2 4l5 4.500L12 4" fill="none" stroke="#222" stroke-width="2.200"/></svg>
<svg class="ic" style="left:689.4px;top:6.3px" width="23" height="23" viewBox="0 0 24 24"><path d="M2.500 5l2-2.500h4l1.500 2V15l1.500-1.500V21l-1.500 1H4.500l-2-2z" fill="#fff" stroke="#2a2a2a" stroke-width="1.3" stroke-linejoin="round" stroke-linecap="round"/><path d="M13 21v-8l3 2V3h4l1.500 2v15l-1.500 2h-5.500z" fill="#8e8e8e" stroke="#2a2a2a" stroke-width="1.3" stroke-linejoin="round" stroke-linecap="round"/><path d="M11 3.500c2 3 2 8 1 11" stroke="#aaa" fill="none" stroke-width="1.500"/></svg>
<i class="sep" style="left:719.2px"></i>
<svg class="ic" style="left:727.0px;top:6.3px" width="23" height="23" viewBox="0 0 24 24"><circle cx="8.500" cy="12" r="6" fill="#fff" stroke="#2a2a2a" stroke-width="1.3" stroke-linejoin="round" stroke-linecap="round"/><circle cx="15.500" cy="12" r="6" fill="#fff" stroke="#2a2a2a" stroke-width="1.3" stroke-linejoin="round" stroke-linecap="round"/><path d="M12 7.100a6 6 0 0 1 0 9.800a6 6 0 0 1 0-9.800z" fill="#8e8e8e" stroke="#2a2a2a" stroke-width="1.3" stroke-linejoin="round" stroke-linecap="round"/><circle cx="15.500" cy="12" r="6" fill="#8e8e8e" fill-opacity=".55" stroke="#2a2a2a" stroke-width="1.3" stroke-linejoin="round" stroke-linecap="round"/></svg>
<svg class="ic" style="left:761.6px;top:6.3px" width="23" height="23" viewBox="0 0 24 24"><path d="M3 6l3-3h13l2 2v13l-2.500 3H5.500L3 18.500z" fill="#fff" stroke="#2a2a2a" stroke-width="1.3" stroke-linejoin="round" stroke-linecap="round"/><path d="M3 6l2.500 2h13L21 5M5.500 8v13" fill="none" stroke="#2a2a2a" stroke-width="1.3" stroke-linejoin="round" stroke-linecap="round"/><path d="M2 12c4 3 8 3 11 1s6-2 9-1" fill="none" stroke="#999" stroke-width="1.300"/></svg>
<svg class="ic" style="left:795.2px;top:6.3px" width="23" height="23" viewBox="0 0 24 24"><rect x="3" y="12" width="9" height="9" rx="1" fill="#fff" stroke="#2a2a2a" stroke-width="1.3" stroke-linejoin="round" stroke-linecap="round"/><path d="M3 12l2-2h9l-2 2M14 10v9l-2 2" fill="#fff" stroke="#2a2a2a" stroke-width="1.3" stroke-linejoin="round" stroke-linecap="round"/><path d="M15.500 2.500l6 5-3.500 7-6-5z" fill="#8e8e8e" stroke="#2a2a2a" stroke-width="1.3" stroke-linejoin="round" stroke-linecap="round"/><path d="M6 8c0-3 2-5 4-5.500M18 17c1 0 2 1.500 1 4" fill="none" stroke="#2a2a2a" stroke-width="1.200"/><path d="M9 1l2.500 1.500L9 4.500zM16.500 20l2.500 2 1-3z" fill="#2a2a2a"/></svg>
<svg class="ic" style="left:824.4px;top:12.0px" width="14" height="12" viewBox="0 0 14 12"><path d="M2 4l5 4.500L12 4" fill="none" stroke="#222" stroke-width="2.200"/></svg>
<svg class="ic" style="left:847.3px;top:6.3px" width="23" height="23" viewBox="0 0 24 24"><path d="M4 5.500l2-2h11l2 2V18l-2 2H6l-2-2z" fill="#8e8e8e" stroke="#aaa" stroke-width="1"/><path d="M7 6h10v12H7z" fill="#b5b5b5"/><circle cx="16.500" cy="17" r="5.200" fill="#333"/><path d="M14.300 14.800l4.400 4.400m0-4.400l-4.400 4.400" stroke="#fff" stroke-width="1.800" fill="none"/></svg>
<i class="sep" style="left:877.7px"></i>
<svg class="ic" style="left:885.6px;top:6.3px" width="23" height="23" viewBox="0 0 24 24"><path d="M2 13c2-6 6-9 11-10.500 3 2 5 3 8 3.500-3 1-5 4-6 8-2-1-4-1-6 1-2 2-5 2-7-2z" fill="#8e8e8e"/><path d="M12 11l5-3.500c2 1.500 3.500 1.500 5 1-2 3-3 6-3.500 9.500-1.500-1-3-1-4.500 0z" fill="#fff" stroke="#2a2a2a" stroke-width="1.3" stroke-linejoin="round" stroke-linecap="round"/><path d="M9.500 6.500l2 8 2-2.500 3 3.500" fill="#222" stroke="#222" stroke-width="1.300"/></svg>
<svg class="ic" style="left:918.4px;top:6.3px" width="23" height="23" viewBox="0 0 24 24"><path d="M2 8c3-3 8-5 13-5.500 2 3 2 8 0 12-5-1-10 0-13-6.500z" fill="#8e8e8e"/><circle cx="16" cy="16.500" r="5.300" fill="#333"/><path d="M13.800 14.300l4.400 4.400m0-4.400l-4.400 4.400" stroke="#fff" stroke-width="1.800" fill="none"/></svg>
<svg class="ic" style="left:953.0px;top:6.3px" width="23" height="23" viewBox="0 0 24 24"><path d="M2.500 14l4-4.500h13l2 2V20l-2 1.500H5L2.500 19z" fill="#fff" stroke="#2a2a2a" stroke-width="1.3" stroke-linejoin="round" stroke-linecap="round"/><path d="M6.500 9.500l2.500 4h10.500l-2.500-4z" fill="#8e8e8e" stroke="#2a2a2a" stroke-width="1.3" stroke-linejoin="round" stroke-linecap="round"/><path d="M2.500 14l2.500 2h14.500l2-4.500M5 16v5.500" fill="none" stroke="#2a2a2a" stroke-width="1.3" stroke-linejoin="round" stroke-linecap="round"/><path d="M13 11.500V4m-3.200 3L13 3l3.200 4" fill="none" stroke="#222" stroke-width="2"/></svg>
<svg class="ic" style="left:987.7px;top:6.3px" width="23" height="23" viewBox="0 0 24 24"><path d="M5 7c3-3 8-4.500 12-4 1.500 2.500 3 4 5 5-4 .5-8 1-11 4-2-2-4-3.500-6-5z" fill="#8e8e8e"/><path d="M2.500 14l3-2.500h13.500l2.500 2V20l-2 1.500H5L2.500 19z" fill="#fff" stroke="#2a2a2a" stroke-width="1.3" stroke-linejoin="round" stroke-linecap="round"/><path d="M2.500 14l2.500 2h14.500l2-2.500M5 16v5.500" fill="none" stroke="#2a2a2a" stroke-width="1.3" stroke-linejoin="round" stroke-linecap="round"/></svg>
<i class="sep" style="left:1017.4px"></i>
<svg class="ic" style="left:1025.9px;top:6.3px" width="23" height="23" viewBox="0 0 24 24"><path d="M3 3.500l18 2.500v15.500L3 19z" fill="#c9c9c9" stroke="#2a2a2a" stroke-width="1.3" stroke-linejoin="round" stroke-linecap="round"/><path d="M12 5v8.500l9 1.200V6z" fill="#fff" fill-opacity=".5" stroke="#2a2a2a" stroke-width="1.3" stroke-linejoin="round" stroke-linecap="round"/><path d="M3 3.500l18 2.500v15.500L3 19z" fill="#c4c4c4" stroke="#2a2a2a" stroke-width="1.3" stroke-linejoin="round" stroke-linecap="round"/><path d="M12 4.800v8.200l9 1.500" fill="none" stroke="#2a2a2a" stroke-width="1.3" stroke-linejoin="round" stroke-linecap="round"/></svg>
<svg class="ic" style="left:1058.7px;top:6.3px" width="23" height="23" viewBox="0 0 24 24"><path d="M4 8l3-4h6v15l-2.500 2.500H4z" fill="#fff" stroke="#2a2a2a" stroke-width="1.3" stroke-linejoin="round" stroke-linecap="round"/><path d="M4 8h6.500l2.500-4M10.500 8v13.500" fill="none" stroke="#2a2a2a" stroke-width="1.3" stroke-linejoin="round" stroke-linecap="round"/><path d="M15 5c3 1 5 0 6-2 1 5 1 11-1 17-1-2-3-3-5-3 1-4 1-8 0-12z" fill="#8e8e8e"/><path d="M10.500 10v3m0 2.500v3" stroke="#222" stroke-width="1.800" stroke-dasharray="2 2"/></svg>
<svg class="ic" style="left:1088.0px;top:12.0px" width="14" height="12" viewBox="0 0 14 12"><path d="M2 4l5 4.500L12 4" fill="none" stroke="#222" stroke-width="2.200"/></svg>
<svg class="ic" style="left:1111.6px;top:6.3px" width="23" height="23" viewBox="0 0 24 24"><path d="M5 6c2-3 12-3 14-.5M5 6c1 2 9 3 15 1M5 6c-1.500 3 2 4.500 6 5M19 5.500c1 1.500 0 2.500-1 3M4.500 13c2-2.500 10-3 14.500-1M4.500 13c1 2 9 3 15 1M4.500 13c-1.500 3 2 4.500 6 5M19.500 12c1 1.500 0 2.500-1 3M5 19.500c2-2.500 10-3 14-1M19 18.500c-4 2-10 3-14 1c-1 .5-1.500 1.500-1 2.500" fill="none" stroke="#2a2a2a" stroke-width="1.700" stroke-linecap="round"/></svg>
<svg class="ic" style="left:1140.5px;top:12.0px" width="14" height="12" viewBox="0 0 14 12"><path d="M2 4l5 4.500L12 4" fill="none" stroke="#222" stroke-width="2.200"/></svg>
<svg class="ic" style="left:1163.4px;top:6.3px" width="23" height="23" viewBox="0 0 24 24"><circle cx="12" cy="12" r="9.300" fill="#fff" stroke="#2a2a2a" stroke-width="1.3" stroke-linejoin="round" stroke-linecap="round"/><circle cx="12" cy="12" r="7" fill="#fff" stroke="#2a2a2a" stroke-width="1.3" stroke-linejoin="round" stroke-linecap="round"/><path d="M12 6v6.500h6" fill="none" stroke="#2a2a2a" stroke-width="1.800"/></svg>
<svg class="ic" style="left:1197.3px;top:6.3px" width="23" height="23" viewBox="0 0 24 24"><path d="M3 13l3.500-3H12V7l3-3.500h6.500V19L19 22H3z" fill="#fff" stroke="#2a2a2a" stroke-width="1.3" stroke-linejoin="round" stroke-linecap="round"/><path d="M3 13h9.500v-3.500M12.500 13L15 10M12 7h6.500V19M18.500 7l3-3.500M3 13v9h16V19" fill="none" stroke="#2a2a2a" stroke-width="1.3" stroke-linejoin="round" stroke-linecap="round"/><path d="M3 3.500h6l-2 2 5 5-1.500 1.500-5-5-2.500 2z" fill="#222"/></svg>
<span class="abs" style="left:1233px;top:8px;width:22px;height:20px;font-weight:700;color:#222;white-space:nowrap;line-height:20px"><span style="font-size:16px;position:absolute;left:0;top:-1.5px;transform:scaleX(.85);transform-origin:0 50%">(</span><span style="font-family:'Liberation Serif',serif;font-style:italic;font-size:20px;position:absolute;left:4.500px;top:-2px">x</span><span style="font-size:16px;position:absolute;left:15.500px;top:-1.5px;transform:scaleX(.85);transform-origin:0 50%">)</span></span>
<svg class="ic" style="left:1264.7px;top:6.3px" width="23" height="23" viewBox="0 0 24 24"><g fill="#fff" stroke="#888" stroke-width="1.100" stroke-linejoin="round"><path d="M8 5l4-2.500 4 2.500v4.500l-4 2.500-4-2.500z"/><path d="M8 5l4 2.500 4-2.500M12 7.500v4.500"/><path d="M3.500 13.500l4-2.500 4 2.500v4.500l-4 2.500-4-2.500z"/><path d="M3.500 13.500l4 2.500 4-2.500M7.500 16v4.500"/><path d="M12.500 13.500l4-2.500 4 2.500v4.500l-4 2.500-4-2.500z"/><path d="M12.500 13.500l4 2.500 4-2.500M16.500 16v4.500"/></g></svg>
<i class="sep" style="left:1295.4px"></i>
<svg class="ic" style="left:1303.5px;top:6.3px" width="23" height="23" viewBox="0 0 24 24"><path d="M4 5l3-2.500h12v6h-6v6h6v6H7l-3-2.500z" fill="#8e8e8e" stroke="#2a2a2a" stroke-width="1.3" stroke-linejoin="round" stroke-linecap="round"/><path d="M4 5v13l3 2.500V6.500L4 5l3-2.500h12L17 5z" fill="#fff" stroke="#2a2a2a" stroke-width="1.3" stroke-linejoin="round" stroke-linecap="round"/><path d="M7 6.500h10" fill="none" stroke="#2a2a2a" stroke-width="1.3" stroke-linejoin="round" stroke-linecap="round"/></svg>
<svg class="ic" style="left:1337.9px;top:6.3px" width="23" height="23" viewBox="0 0 24 24"><path d="M10 5.500l4-3h6.500l-1 3v8l-2.500 2.500h-7z" fill="#fff" stroke="#2a2a2a" stroke-width="1.3" stroke-linejoin="round" stroke-linecap="round"/><path d="M10 5.500h7l3.500-3M17 5.500V16" fill="none" stroke="#2a2a2a" stroke-width="1.3" stroke-linejoin="round" stroke-linecap="round"/><path d="M5 11l3-2h7v8l-2 2.500H5z" fill="#ddd" stroke="#2a2a2a" stroke-width="1.3" stroke-linejoin="round" stroke-linecap="round"/><circle cx="6.500" cy="18" r="4.800" fill="#333"/><path d="M4.500 16l4 4m0-4l-4 4" stroke="#fff" stroke-width="1.600" fill="none"/></svg>
<svg class="ic" style="left:1371.6px;top:6.3px" width="23" height="23" viewBox="0 0 24 24"><path d="M3 10l5-7h6l7 9v8l-2 2H3z" fill="#fff" stroke="#2a2a2a" stroke-width="1.3" stroke-linejoin="round" stroke-linecap="round"/><path d="M9.500 5.500l1 5h9l-5.500-7.500z" fill="#8e8e8e" stroke="#2a2a2a" stroke-width="1.3" stroke-linejoin="round" stroke-linecap="round"/><path d="M3 10h7.500v5H19v7M10.500 10l-1-4.500" fill="none" stroke="#2a2a2a" stroke-width="1.3" stroke-linejoin="round" stroke-linecap="round"/></svg>
<svg class="ic" style="left:1405.4px;top:6.3px" width="23" height="23" viewBox="0 0 24 24"><path d="M3 5.500c2-2 11-3 14-1.500l4 3v11c-1 2-3 3-5 3H7c-2 0-3-1-4-3z" fill="#fff" stroke="#2a2a2a" stroke-width="1.3" stroke-linejoin="round" stroke-linecap="round"/><rect x="8.500" y="8" width="12" height="12.500" rx="1.500" fill="#8e8e8e" stroke="#2a2a2a" stroke-width="1.3" stroke-linejoin="round" stroke-linecap="round"/><path d="M3 5.500l5.500 3" fill="none" stroke="#2a2a2a" stroke-width="1.3" stroke-linejoin="round" stroke-linecap="round"/></svg>
<svg class="ic" style="left:1438.8px;top:6.3px" width="23" height="23" viewBox="0 0 24 24"><path d="M2 2h9v7H2z" fill="#fff" stroke="#222" stroke-width="1"/><path d="M2 4.300h9M2 6.600h9M5 2v7M8 2v7" stroke="#222" stroke-width="1" fill="none"/><path d="M9 9l3-3h9v5h-5v5h5v5h-9l-3-2.500z" fill="#8e8e8e" stroke="#2a2a2a" stroke-width="1.3" stroke-linejoin="round" stroke-linecap="round"/><path d="M9 9v9.500l3 2.500V10.500z" fill="#fff" stroke="#2a2a2a" stroke-width="1.3" stroke-linejoin="round" stroke-linecap="round"/></svg>
<svg class="ic" style="left:1468.9px;top:12.0px" width="14" height="12" viewBox="0 0 14 12"><path d="M2 4l5 4.500L12 4" fill="none" stroke="#222" stroke-width="2.200"/></svg>
<i class="sep" style="left:1487.8px"></i>
<svg class="ic" style="left:1494.4px;top:6.3px" width="23" height="23" viewBox="0 0 24 24"><path d="M3.500 5l3-2v13c0 3 8 3 10 1l3.500-3V3l-3.500 2.500V16" fill="#fff" stroke="#2a2a2a" stroke-width="1.3" stroke-linejoin="round" stroke-linecap="round"/><path d="M3.500 5v13c0 4 9 4 13 1.500l3.500-3V3l-3.500 2.500v11c-2 2-8 2-10 0V3z" fill="#fff" stroke="#2a2a2a" stroke-width="1.3" stroke-linejoin="round" stroke-linecap="round"/><path d="M16.500 16.500l3.500-3V3l-3.500 2.500z" fill="#8e8e8e" stroke="#2a2a2a" stroke-width="1.3" stroke-linejoin="round" stroke-linecap="round"/><path d="M6.500 16.500c2 1.500 7 2 10 0l3.500-3" fill="#bbb" stroke="#2a2a2a" stroke-width="1.3" stroke-linejoin="round" stroke-linecap="round"/></svg>
<svg class="ic" style="left:1524.6px;top:12.0px" width="14" height="12" viewBox="0 0 14 12"><path d="M2 4l5 4.500L12 4" fill="none" stroke="#222" stroke-width="2.200"/></svg>
<i class="sep" style="left:1544.0px"></i>
<svg class="ic" style="left:1551.3px;top:6.3px" width="23" height="23" viewBox="0 0 24 24"><rect x="2.500" y="2.500" width="19" height="19" rx="1.500" fill="#999" stroke="#1a1a1a" stroke-width="2"/><path d="M5 5l14 14M19 5L5 19" stroke="#1a1a1a" stroke-width="1.400"/><path d="M12 12L6.500 5h11zM12 12l5.500 7h-11z" fill="#fff" stroke="#1a1a1a" stroke-width="1"/></svg>
<svg class="ic" style="left:1580.8px;top:12.0px" width="14" height="12" viewBox="0 0 14 12"><path d="M2 4l5 4.500L12 4" fill="none" stroke="#222" stroke-width="2.200"/></svg>
<div class="abs" style="left:1609px;top:2px;width:160px;height:32px;background:#f0f1f2;border-radius:3px"></div>
<span class="t" style="left:1618.6px;top:8.4px;font-size:14.5px;line-height:19px;color:#3d4852;transform:scaleX(0.937);">Search tools...</span>
<span class="abs" style="left:1709.5px;top:10.500px;width:32px;height:17px;border:1px solid #b9b9b9;border-radius:2px;background:#f7f7f7"></span>
<span class="abs" style="left:1743px;top:10.500px;width:15px;height:17px;border:1px solid #b9b9b9;border-radius:2px;background:#f7f7f7"></span>
<span class="t" style="left:1712.3px;top:11.5px;font-size:11.5px;line-height:15px;color:#333;transform:scaleX(1.043);">alt/</span>
<span class="t" style="left:1729.5px;top:15.7px;font-size:7.5px;line-height:10px;color:#333;">⌥</span>
<span class="t" style="left:1746.8px;top:11.5px;font-size:11.5px;line-height:15px;color:#333;transform:scaleX(0.957);">c</span>
</div>
<aside id="leftbar"><div class="tab"></div>
<svg class="ic" style="left:9.0px;top:8.0px" width="22" height="21" viewBox="0 0 22 21"><circle cx="4" cy="4" r="2.600" fill="none" stroke="#222" stroke-width="1.600"/><circle cx="4" cy="17.500" r="1.800" fill="#222"/><path d="M4 6.500v10M4 11.500c0-2 1-2.500 4-2.500" fill="none" stroke="#222" stroke-width="1.600"/><path d="M10 3.500h11M11.500 9h9.500M11.500 14h9.500M10 19h11" stroke="#222" stroke-width="1.900"/></svg>
<svg class="ic" style="left:10.0px;top:42.0px" width="22" height="24" viewBox="0 0 22 24"><circle cx="6" cy="11" r="3" fill="#222"/><path d="M6 1v5M6 16v6" stroke="#222" stroke-width="1.800" stroke-dasharray="2.200 1.600"/><path d="M16.500 11.500v8M12.500 15.500h8" stroke="#1c5cb0" stroke-width="2.200"/></svg>
<svg class="ic" style="left:9.0px;top:77.0px" width="22" height="20" viewBox="0 0 22 20"><ellipse cx="11" cy="7.500" rx="10" ry="7" fill="#222"/><path d="M5 12l-3 7 8-5z" fill="#222"/></svg>
<svg class="ic" style="left:7.0px;top:111.0px" width="24" height="24" viewBox="0 0 24 24"><circle cx="14" cy="14" r="7.500" fill="none" stroke="#222" stroke-width="2"/><path d="M11.500 3h5M14 3v3.500M14 14l3-3.500" stroke="#222" stroke-width="1.800" fill="none"/><path d="M1 10h5M0 14h4.500M1.500 18h4" stroke="#222" stroke-width="1.300"/></svg>
<i class="abs" style="left:0;top:141.500px;width:39px;height:1px;background:#d6d9dc"></i>
<svg class="ic" style="left:11.0px;top:148.5px" width="18" height="21" viewBox="0 0 18 21"><rect x="1" y="1" width="16" height="19" rx="2" fill="#fff" stroke="#222" stroke-width="1.700"/><path d="M3.500 5.500l1.300 1.300 2-2.500M3.500 10.500l1.300 1.300 2-2.500M3.500 15.500l1.300 1.300 2-2.500" fill="none" stroke="#222" stroke-width="1.100"/><path d="M9 6h5.500M9 11h5.500M9 16h5.500" stroke="#222" stroke-width="1.600"/></svg>
<svg class="ic" style="left:9.0px;top:898.0px" width="24" height="20" viewBox="0 0 24 20"><path d="M1 2h17v9H1z" fill="#222"/><circle cx="14.500" cy="11.500" r="4.800" fill="#f7f8f9" stroke="#222" stroke-width="1.800"/><path d="M18 15l4 4" stroke="#222" stroke-width="2.400"/></svg>
</aside>
<section id="features">
<span class="t" style="left:3.5px;top:6.9px;font-size:13.3px;line-height:17px;color:#333;transform:scaleX(0.993);">Features (15)</span>
<svg class="ic" style="left:136.0px;top:9.0px" width="19" height="16" viewBox="0 0 19 16"><path d="M1 2.500q0-1.500 1.500-1.500h4l1.500 2h8.500q1.500 0 1.500 1.500v8.500q0 1.500-1.500 1.500H7" fill="none" stroke="#8a94b8" stroke-width="1.100"/><path d="M1 9v4.500q0 1.500 1.500 1.500H4" fill="none" stroke="#8a94b8" stroke-width="1.100" stroke-dasharray="2 1.500"/><path d="M5.500 6v7M2 9.500h7" stroke="#4468c0" stroke-width="1.600"/></svg>
<svg class="ic" style="left:166.0px;top:6.5px" width="19" height="21" viewBox="0 0 19 21"><circle cx="9.500" cy="12" r="7.300" fill="none" stroke="#222" stroke-width="1.900"/><path d="M7 1.500h5M9.500 1.500v3M9.500 12l3 3M15 5l1.500-1.500" stroke="#222" stroke-width="1.700" fill="none"/></svg>
<svg class="ic" style="left:10.0px;top:39.0px" width="17" height="18" viewBox="0 0 17 18"><path d="M1 1.500h15l-6 7v7.500l-3-2v-5.500z" fill="none" stroke="#222" stroke-width="1.500" stroke-linejoin="round"/></svg>
<div class="abs" style="left:39.2px;top:32.4px;width:157.500px;height:29px;border:1px solid #cfcfcf;border-radius:3px;background:#fff"></div>
<span class="t" style="left:44.2px;top:39.2px;font-size:13px;line-height:17px;color:#9a9a9a;font-style:italic;transform:scaleX(0.989);">Filter by name or type</span>
<svg class="ic" style="left:4.0px;top:70.5px" width="12" height="8" viewBox="0 0 12 8"><path d="M1.500 1.500l4.500 4.500 4.500-4.500" fill="none" stroke="#666" stroke-width="1.900"/></svg>
<span class="t" style="left:22.8px;top:66.3px;font-size:13px;line-height:17px;color:#444;transform:scaleX(1.027);">Default geometry</span>
<svg class="ic" style="left:24.7px;top:92.7px" width="16" height="16" viewBox="0 0 16 16"><circle cx="8" cy="8" r="3.300" fill="none" stroke="#555" stroke-width="1"/><circle cx="8" cy="8" r="1.400" fill="#555"/></svg>
<span class="t" style="left:44.9px;top:92.3px;font-size:13px;line-height:17px;color:#444;transform:scaleX(0.997);">Origin</span>
<svg class="ic" style="left:24.7px;top:118.7px" width="16" height="16" viewBox="0 0 16 16"><path d="M1.500 1.500l13 2v11l-13-2z" fill="#d0d0d0" stroke="#666" stroke-width="1.100" stroke-linejoin="round"/><path d="M8 2.600v5.800l6.500 1" fill="none" stroke="#666" stroke-width="1.100"/></svg>
<span class="t" style="left:44.9px;top:118.3px;font-size:13px;line-height:17px;color:#444;transform:scaleX(1.053);">Top</span>
<svg class="ic" style="left:24.7px;top:144.7px" width="16" height="16" viewBox="0 0 16 16"><path d="M1.500 1.500l13 2v11l-13-2z" fill="#d0d0d0" stroke="#666" stroke-width="1.100" stroke-linejoin="round"/><path d="M8 2.600v5.800l6.500 1" fill="none" stroke="#666" stroke-width="1.100"/></svg>
<span class="t" style="left:44.9px;top:144.3px;font-size:13px;line-height:17px;color:#444;transform:scaleX(1.074);">Front</span>
<svg class="ic" style="left:24.7px;top:170.7px" width="16" height="16" viewBox="0 0 16 16"><path d="M1.500 1.500l13 2v11l-13-2z" fill="#d0d0d0" stroke="#666" stroke-width="1.100" stroke-linejoin="round"/><path d="M8 2.600v5.800l6.500 1" fill="none" stroke="#666" stroke-width="1.100"/></svg>
<span class="t" style="left:44.9px;top:170.3px;font-size:13px;line-height:17px;color:#444;transform:scaleX(1.041);">Right</span>
<svg class="ic" style="left:6.5px;top:198.0px" width="8" height="12" viewBox="0 0 8 12"><path d="M1.500 1.500l4.500 4.500-4.500 4.500" fill="none" stroke="#666" stroke-width="1.900"/></svg>
<svg class="ic" style="left:24.7px;top:196.7px" width="16" height="16" viewBox="0 0 16 16"><path d="M8 1.500l6 3v7l-6 3.500-6-3.500v-7z" fill="#fff" stroke="#3a3a3a" stroke-width="1.100" stroke-linejoin="round" stroke-linecap="round"/><path d="M2 4.500l6 3 6-3M8 7.500V15" fill="none" stroke="#3a3a3a" stroke-width="1.100" stroke-linejoin="round" stroke-linecap="round"/></svg>
<span class="t" style="left:45.8px;top:196.3px;font-size:13px;line-height:17px;color:#444;transform:scaleX(0.968);">Origin Cube 1</span>
<svg class="ic" style="left:157.0px;top:194.0px" width="6" height="21" viewBox="0 0 6 21"><circle cx="3" cy="10" r="2.700" fill="#222"/><path d="M3 1v5M3 14v5.500" stroke="#222" stroke-width="1.500" stroke-dasharray="1.700 1.500"/></svg>
<svg class="ic" style="left:6.5px;top:224.0px" width="8" height="12" viewBox="0 0 8 12"><path d="M1.500 1.500l4.500 4.500-4.500 4.500" fill="none" stroke="#666" stroke-width="1.900"/></svg>
<svg class="ic" style="left:24.7px;top:222.7px" width="16" height="16" viewBox="0 0 16 16"><path d="M2 9l2-2h4V4.500l2-2h4.500V12l-2 2.500H2z" fill="#fff" stroke="#3a3a3a" stroke-width="1.100" stroke-linejoin="round" stroke-linecap="round"/><path d="M2 9h6.500V6.500M8.500 9l1.500-1.500M12.500 14.500V5M10 2.500" fill="none" stroke="#3a3a3a" stroke-width="1.100" stroke-linejoin="round" stroke-linecap="round"/><path d="M1.500 1.500h4.500l-1.500 1.500 3.500 3.500-1 1-3.500-3.500-2 1.500z" fill="#222"/></svg>
<span class="t" style="left:45.8px;top:222.3px;font-size:13px;line-height:17px;color:#444;transform:scaleX(1.006);">Layout Sketches</span>
<div class="row hl" style="top:244.5px"></div>
<svg class="ic" style="left:4.0px;top:252.5px" width="12" height="8" viewBox="0 0 12 8"><path d="M1.500 1.500l4.500 4.500 4.500-4.500" fill="none" stroke="#666" stroke-width="1.900"/></svg>
<span class="t" style="left:22.8px;top:248.3px;font-size:13px;line-height:17px;color:#444;transform:scaleX(0.991);">Tubes (3)</span>
<svg class="ic" style="left:24.7px;top:274.7px" width="16" height="16" viewBox="0 0 16 16"><rect x="1.500" y="2" width="13" height="12.500" rx="2.500" fill="#9a9a9a" stroke="#777" stroke-width="1"/><path d="M8 2.500v12M2 8h12" stroke="#c8c8c8" stroke-width="1"/><path d="M1.500 4.500l1.500-2M3.500 14.500" stroke="#ddd"/></svg>
<span class="t" style="left:44.9px;top:274.3px;font-size:13px;line-height:17px;color:#444;transform:scaleX(0.986);">Extrude Individ...</span>
<svg class="ic" style="left:157.0px;top:272.0px" width="6" height="21" viewBox="0 0 6 21"><circle cx="3" cy="10" r="2.700" fill="#222"/><path d="M3 1v5M3 14v5.500" stroke="#222" stroke-width="1.500" stroke-dasharray="1.700 1.500"/></svg>
<div class="row hl" style="top:296.5px"></div>
<svg class="ic" style="left:24.7px;top:300.7px" width="16" height="16" viewBox="0 0 16 16"><path d="M1.500 2l7-1 6 3v10.500l-6 1-7-3z" fill="#aaa" stroke="#3a3a3a" stroke-width="1.100" stroke-linejoin="round" stroke-linecap="round"/><path d="M1.500 2l6 2.500v10.500M7.500 4.500l7-.5" fill="none" stroke="#3a3a3a" stroke-width="1.100" stroke-linejoin="round" stroke-linecap="round"/><path d="M9.500 6.500l3.500-.5v6.500l-3.500 1z" fill="#666"/><path d="M3.500 4.500v7.500M5.500 5.200v8M2.200 6.500l4.500 1.600M2.200 9.500l4.500 1.600" stroke="#fff" stroke-width="1"/></svg>
<span class="t" style="left:44.9px;top:300.3px;font-size:13px;line-height:17px;color:#444;transform:scaleX(0.995);">Tube Converter 1</span>
<svg class="ic" style="left:157.0px;top:298.0px" width="6" height="21" viewBox="0 0 6 21"><circle cx="3" cy="10" r="2.700" fill="#222"/><path d="M3 1v5M3 14v5.500" stroke="#222" stroke-width="1.500" stroke-dasharray="1.700 1.500"/></svg>
<div class="row hl" style="top:322.5px"></div>
<svg class="ic" style="left:24.7px;top:326.7px" width="16" height="16" viewBox="0 0 16 16"><path d="M1.500 2l7-1 6 3v10.500l-6 1-7-3z" fill="#aaa" stroke="#3a3a3a" stroke-width="1.100" stroke-linejoin="round" stroke-linecap="round"/><path d="M1.500 2l6 2.500v10.500M7.500 4.500l7-.5" fill="none" stroke="#3a3a3a" stroke-width="1.100" stroke-linejoin="round" stroke-linecap="round"/><path d="M9.500 6.500l3.500-.5v6.500l-3.500 1z" fill="#666"/><path d="M3.500 4.500v7.500M5.500 5.200v8M2.200 6.500l4.500 1.600M2.200 9.500l4.500 1.600" stroke="#fff" stroke-width="1"/></svg>
<span class="t" style="left:44.9px;top:326.3px;font-size:13px;line-height:17px;color:#444;transform:scaleX(1.004);">Tube Converter 2</span>
<svg class="ic" style="left:157.0px;top:324.0px" width="6" height="21" viewBox="0 0 6 21"><circle cx="3" cy="10" r="2.700" fill="#222"/><path d="M3 1v5M3 14v5.500" stroke="#222" stroke-width="1.500" stroke-dasharray="1.700 1.500"/></svg>
<svg class="ic" style="left:4.0px;top:356.5px" width="12" height="8" viewBox="0 0 12 8"><path d="M1.500 1.500l4.500 4.500 4.500-4.500" fill="none" stroke="#666" stroke-width="1.900"/></svg>
<span class="t" style="left:22.8px;top:352.3px;font-size:13px;line-height:17px;color:#444;transform:scaleX(1.009);">Bellypan (5)</span>
<svg class="ic" style="left:24.7px;top:378.7px" width="16" height="16" viewBox="0 0 16 16"><path d="M3 11.500l8-8.500 2.500 2.500-8 8.500-3.300.8z" fill="#fff" stroke="#aaa" stroke-width="1.100" stroke-linejoin="round"/><path d="M1 15.500h14" stroke="#8fa6e0" stroke-width="1.100"/></svg>
<span class="t" style="left:44.9px;top:378.3px;font-size:13px;line-height:17px;color:#b0b0b0;transform:scaleX(1.026);">Bellypan</span>
<svg class="ic" style="left:24.7px;top:404.7px" width="16" height="16" viewBox="0 0 16 16"><path d="M1.500 3l1.500-1.500h10.500L15 3v10.500L13.500 15H3l-1.500-1.500z" fill="#fff" stroke="#3a3a3a" stroke-width="1.100" stroke-linejoin="round" stroke-linecap="round"/><path d="M3.500 3.500H15M3.500 3.500V15" fill="none" stroke="#3a3a3a" stroke-width="1.100" stroke-linejoin="round" stroke-linecap="round"/><rect x="6.500" y="6.500" width="8" height="8" fill="#8e8e8e" stroke="#3a3a3a" stroke-width="1.100" stroke-linejoin="round" stroke-linecap="round"/></svg>
<span class="t" style="left:44.9px;top:404.3px;font-size:13px;line-height:17px;color:#444;transform:scaleX(0.984);">Extrude 1</span>
<svg class="ic" style="left:24.7px;top:430.7px" width="16" height="16" viewBox="0 0 16 16"><path d="M8 1l5.500 2.500c1 .5 1.500 1 1.500 2v5.500c0 1-.5 1.500-1.500 2L8 15.500 2.500 13C1.500 12.500 1 12 1 11V5.500c0-1 .5-1.500 1.500-2z" fill="#aaa" stroke="#888" stroke-width="1"/><ellipse cx="8" cy="5" rx="3" ry="1.600" fill="#777"/><path d="M8 8v7" stroke="#ccc"/></svg>
<span class="t" style="left:44.9px;top:430.3px;font-size:13px;line-height:17px;color:#444;transform:scaleX(1.019);">Fillet All Edges 1</span>
<svg class="ic" style="left:157.0px;top:428.0px" width="6" height="21" viewBox="0 0 6 21"><circle cx="3" cy="10" r="2.700" fill="#222"/><path d="M3 1v5M3 14v5.500" stroke="#222" stroke-width="1.500" stroke-dasharray="1.700 1.500"/></svg>
<svg class="ic" style="left:24.7px;top:456.7px" width="16" height="16" viewBox="0 0 16 16"><path d="M3 11.500l8-8.500 2.500 2.500-8 8.500-3.300.8z" fill="#fff" stroke="#aaa" stroke-width="1.100" stroke-linejoin="round"/><path d="M1 15.500h14" stroke="#8fa6e0" stroke-width="1.100"/></svg>
<span class="t" style="left:44.9px;top:456.3px;font-size:13px;line-height:17px;color:#b0b0b0;transform:scaleX(1.015);">Bellypan Holes</span>
<svg class="ic" style="left:24.7px;top:482.7px" width="16" height="16" viewBox="0 0 16 16"><path d="M1.500 3l1.500-1.500h10.500L15 3v10.500L13.500 15H3l-1.500-1.500z" fill="#fff" stroke="#3a3a3a" stroke-width="1.100" stroke-linejoin="round" stroke-linecap="round"/><path d="M3.500 3.500H15M3.500 3.500V15" fill="none" stroke="#3a3a3a" stroke-width="1.100" stroke-linejoin="round" stroke-linecap="round"/><rect x="6.500" y="6.500" width="8" height="8" fill="#8e8e8e" stroke="#3a3a3a" stroke-width="1.100" stroke-linejoin="round" stroke-linecap="round"/></svg>
<span class="t" style="left:44.9px;top:482.3px;font-size:13px;line-height:17px;color:#444;transform:scaleX(0.999);">Extrude 2</span>
<div class="row sel" style="top:504.8px"></div>
<svg class="ic" style="left:4.7px;top:507.5px" width="17" height="17" viewBox="0 0 16 16"><path d="M3.500 1.500h7.500q1.500 0 2.700 1l1.600 1.500q1.500 1.500 0 3l-7 7q-1.500 1.500-3 .5l-2.500-1.500q-1.300-.9-1.300-2.500V3.500q0-2 2-2z" fill="#fff" stroke="#26384d" stroke-width="1.500" stroke-linejoin="round"/><circle cx="5.800" cy="5.300" r="1.500" fill="none" stroke="#26384d" stroke-width="1.100"/><circle cx="12" cy="5.300" r="1.500" fill="none" stroke="#26384d" stroke-width="1.100"/><circle cx="5.800" cy="11.700" r="1.500" fill="none" stroke="#26384d" stroke-width="1.100"/><path d="M3.600 4v8.500" stroke="#26384d" stroke-width="1.200"/></svg>
<span class="t" style="left:25.8px;top:507.7px;font-size:13px;line-height:17px;color:#1e2a38;font-weight:700;transform:scaleX(0.961);">Gusset 1</span>
<svg class="ic" style="left:157.0px;top:506.0px" width="6" height="21" viewBox="0 0 6 21"><circle cx="3" cy="10" r="2.700" fill="#222"/><path d="M3 1v5M3 14v5.500" stroke="#222" stroke-width="1.500" stroke-dasharray="1.700 1.500"/></svg>
<i class="abs" style="left:9px;top:86px;width:1px;height:105.5px;background:#c9c9c9"></i><i class="abs" style="left:5px;top:191.5px;width:9px;height:1px;background:#c9c9c9"></i>
<i class="abs" style="left:9px;top:269px;width:1px;height:78.5px;background:#c9c9c9"></i><i class="abs" style="left:5px;top:347.5px;width:9px;height:1px;background:#c9c9c9"></i>
<i class="abs" style="left:9px;top:372px;width:1px;height:130.5px;background:#c9c9c9"></i><i class="abs" style="left:5px;top:502.5px;width:9px;height:1px;background:#c9c9c9"></i>
<div class="abs" style="left:5px;top:539px;width:190px;height:6.500px;background:#c4c4c4"></div>
<i class="abs" style="left:0;top:566.5px;width:200px;height:1px;background:#cfcfcf"></i>
<svg class="ic" style="left:4.0px;top:576.8px" width="12" height="8" viewBox="0 0 12 8"><path d="M1.500 1.500l4.500 4.500 4.500-4.500" fill="none" stroke="#666" stroke-width="1.900"/></svg>
<span class="t" style="left:22.8px;top:571.7px;font-size:13px;line-height:17px;color:#444;transform:scaleX(0.999);">Parts (8)</span>
<svg class="ic" style="left:24.5px;top:598.5px" width="16" height="16" viewBox="0 0 16 16"><path d="M1.500 8.500l2-2h4V3l2-1.500h3.500c1 0 1.500.5 1.500 1.500v10l-1.500 1.500h-10c-1 0-1.500-.5-1.500-1.500z" fill="#fff" stroke="#3a3a3a" stroke-width="1.100" stroke-linejoin="round" stroke-linecap="round"/><path d="M1.500 8.500h8V6.500M9.500 8.500l2-2V3M11.500 6.500" fill="none" stroke="#3a3a3a" stroke-width="1.100" stroke-linejoin="round" stroke-linecap="round"/></svg>
<span class="t" style="left:44.9px;top:597.7px;font-size:13px;line-height:17px;color:#444;transform:scaleX(0.976);">Origin Cube</span>
<svg class="ic" style="left:24.5px;top:624.5px" width="16" height="16" viewBox="0 0 16 16"><path d="M1.500 8.500l2-2h4V3l2-1.500h3.500c1 0 1.500.5 1.500 1.500v10l-1.500 1.500h-10c-1 0-1.500-.5-1.500-1.500z" fill="#fff" stroke="#3a3a3a" stroke-width="1.100" stroke-linejoin="round" stroke-linecap="round"/><path d="M1.500 8.500h8V6.500M9.500 8.500l2-2V3M11.500 6.500" fill="none" stroke="#3a3a3a" stroke-width="1.100" stroke-linejoin="round" stroke-linecap="round"/></svg>
<span class="t" style="left:44.9px;top:623.7px;font-size:13px;line-height:17px;color:#444;transform:scaleX(0.994);">Tube 2"x1"x17.5"</span>
<svg class="ic" style="left:24.5px;top:650.5px" width="16" height="16" viewBox="0 0 16 16"><path d="M1.500 8.500l2-2h4V3l2-1.500h3.500c1 0 1.500.5 1.500 1.500v10l-1.500 1.500h-10c-1 0-1.500-.5-1.500-1.500z" fill="#fff" stroke="#3a3a3a" stroke-width="1.100" stroke-linejoin="round" stroke-linecap="round"/><path d="M1.500 8.500h8V6.500M9.500 8.500l2-2V3M11.500 6.500" fill="none" stroke="#3a3a3a" stroke-width="1.100" stroke-linejoin="round" stroke-linecap="round"/></svg>
<span class="t" style="left:44.9px;top:649.7px;font-size:13px;line-height:17px;color:#444;transform:scaleX(0.994);">Tube 2"x1"x17.5"</span>
<div class="row hl" style="top:672px"></div>
<svg class="ic" style="left:24.5px;top:676.5px" width="16" height="16" viewBox="0 0 16 16"><path d="M1.500 8.500l2-2h4V3l2-1.500h3.500c1 0 1.500.5 1.500 1.500v10l-1.500 1.500h-10c-1 0-1.500-.5-1.500-1.500z" fill="#fff" stroke="#3a3a3a" stroke-width="1.100" stroke-linejoin="round" stroke-linecap="round"/><path d="M1.500 8.500h8V6.500M9.500 8.500l2-2V3M11.500 6.500" fill="none" stroke="#3a3a3a" stroke-width="1.100" stroke-linejoin="round" stroke-linecap="round"/></svg>
<span class="t" style="left:44.9px;top:675.7px;font-size:13px;line-height:17px;color:#444;transform:scaleX(1.022);">Tube 2"x2"x24"</span>
<svg class="ic" style="left:24.5px;top:702.5px" width="16" height="16" viewBox="0 0 16 16"><path d="M1.500 8.500l2-2h4V3l2-1.500h3.500c1 0 1.500.5 1.500 1.500v10l-1.500 1.500h-10c-1 0-1.500-.5-1.500-1.500z" fill="#fff" stroke="#3a3a3a" stroke-width="1.100" stroke-linejoin="round" stroke-linecap="round"/><path d="M1.500 8.500h8V6.500M9.500 8.500l2-2V3M11.500 6.500" fill="none" stroke="#3a3a3a" stroke-width="1.100" stroke-linejoin="round" stroke-linecap="round"/></svg>
<span class="t" style="left:44.9px;top:701.7px;font-size:13px;line-height:17px;color:#444;transform:scaleX(0.994);">Tube 2"x1"x17.5"</span>
<div class="row hl" style="top:724px"></div>
<svg class="ic" style="left:24.5px;top:728.5px" width="16" height="16" viewBox="0 0 16 16"><path d="M1.500 8.500l2-2h4V3l2-1.500h3.500c1 0 1.500.5 1.500 1.500v10l-1.500 1.500h-10c-1 0-1.500-.5-1.500-1.500z" fill="#fff" stroke="#3a3a3a" stroke-width="1.100" stroke-linejoin="round" stroke-linecap="round"/><path d="M1.500 8.500h8V6.500M9.500 8.500l2-2V3M11.500 6.500" fill="none" stroke="#3a3a3a" stroke-width="1.100" stroke-linejoin="round" stroke-linecap="round"/></svg>
<span class="t" style="left:44.9px;top:727.7px;font-size:13px;line-height:17px;color:#444;transform:scaleX(0.994);">Tube 2"x1"x17.5"</span>
<svg class="ic" style="left:24.5px;top:754.5px" width="16" height="16" viewBox="0 0 16 16"><path d="M1.500 8.500l2-2h4V3l2-1.500h3.500c1 0 1.500.5 1.500 1.500v10l-1.500 1.500h-10c-1 0-1.500-.5-1.500-1.500z" fill="#fff" stroke="#3a3a3a" stroke-width="1.100" stroke-linejoin="round" stroke-linecap="round"/><path d="M1.500 8.500h8V6.500M9.500 8.500l2-2V3M11.500 6.500" fill="none" stroke="#3a3a3a" stroke-width="1.100" stroke-linejoin="round" stroke-linecap="round"/></svg>
<span class="t" style="left:44.9px;top:753.7px;font-size:13px;line-height:17px;color:#444;transform:scaleX(1.026);">Bellypan</span>
<svg class="ic" style="left:24.5px;top:780.5px" width="16" height="16" viewBox="0 0 16 16"><path d="M1.500 8.500l2-2h4V3l2-1.500h3.500c1 0 1.500.5 1.500 1.500v10l-1.500 1.500h-10c-1 0-1.500-.5-1.500-1.500z" fill="#fff" stroke="#3a3a3a" stroke-width="1.100" stroke-linejoin="round" stroke-linecap="round"/><path d="M1.500 8.500h8V6.500M9.500 8.500l2-2V3M11.500 6.500" fill="none" stroke="#3a3a3a" stroke-width="1.100" stroke-linejoin="round" stroke-linecap="round"/></svg>
<span class="t" style="left:44.9px;top:779.7px;font-size:13px;line-height:17px;color:#222;font-weight:700;transform:scaleX(0.988);">Crosstube Gusset</span>
</section>
<div id="dialog">
<span class="t" style="left:5.8px;top:5.0px;font-size:14.5px;line-height:19px;color:#333;transform:scaleX(0.865);">Gusset 1</span>
<div class="abs" style="left:207px;top:0;width:28px;height:28px;background:#0a8a10"></div>
<svg class="ic" style="left:212.0px;top:7.0px" width="18" height="15" viewBox="0 0 18 15"><path d="M2 7.500l5 5L16 2.500" fill="none" stroke="#fff" stroke-width="3"/></svg>
<svg class="ic" style="left:242.5px;top:8.0px" width="13" height="13" viewBox="0 0 13 13"><path d="M1.500 1.500l10 10M11.500 1.500l-10 10" stroke="#c8232c" stroke-width="2.800"/></svg>
<i class="ul" style="left:1px;top:28px;width:262px"></i>
<div class="abs" style="left:3px;top:34px;width:257px;height:103.500px;border:1px solid #1c5aa6;border-radius:3px;background:#d6ebf8;overflow:hidden">
<i class="abs" style="left:0;top:44px;width:255px;height:24px;background:#dcedf9"></i><i class="abs" style="left:0;top:20px;width:255px;height:24px;background:#d3e9f7"></i><i class="abs" style="left:0;top:68px;width:255px;height:24px;background:#d3e9f7"></i>
</div>
<span class="t" style="left:8.9px;top:39.8px;font-size:9.5px;line-height:12px;color:#555;transform:scaleX(1.053);">Holes</span>
<span class="t" style="left:9.2px;top:55.9px;font-size:14.5px;line-height:19px;color:#444;transform:scaleX(0.894);">Edge of Tube Converter 2</span>
<svg class="ic" style="left:240.0px;top:60.2px" width="8" height="8" viewBox="0 0 8 8"><path d="M.5 .5l7 7M7.500 .5l-7 7" stroke="#b3c6d4" stroke-width="1"/></svg>
<span class="t" style="left:9.2px;top:80.0px;font-size:14.5px;line-height:19px;color:#444;transform:scaleX(0.894);">Edge of Tube Converter 2</span>
<svg class="ic" style="left:240.0px;top:84.3px" width="8" height="8" viewBox="0 0 8 8"><path d="M.5 .5l7 7M7.500 .5l-7 7" stroke="#b3c6d4" stroke-width="1"/></svg>
<span class="t" style="left:9.2px;top:104.2px;font-size:14.5px;line-height:19px;color:#444;transform:scaleX(0.894);">Edge of Tube Converter 2</span>
<svg class="ic" style="left:240.0px;top:108.5px" width="8" height="8" viewBox="0 0 8 8"><path d="M.5 .5l7 7M7.500 .5l-7 7" stroke="#b3c6d4" stroke-width="1"/></svg>
<div class="abs" style="left:6px;top:130px;width:250px;height:7px;overflow:hidden">
<span class="t" style="left:3.2px;top:-1.7px;font-size:14.5px;line-height:19px;color:#444;transform:scaleX(0.894);">Edge of Tube Converter 2</span>
</div>
<span class="t" style="left:4.6px;top:149.4px;font-size:13px;line-height:17px;color:#6a6a6a;transform:scaleX(0.912);">Thickness</span>
<span class="t" style="left:187.2px;top:149.2px;font-size:14.5px;line-height:19px;color:#333;transform:scaleX(0.897);">0.125 in</span>
<i class="ul" style="left:62.7px;top:168.3px;width:173.9px"></i>
<svg class="ic" style="left:241.0px;top:146.0px" width="19" height="19" viewBox="0 0 19 19"><path d="M18 1L6.500 10.500 4.500 8 1.500 17.500l9.500-2.500-2.500-2.500z" fill="#222"/><path d="M2 7l5-5" stroke="#999" stroke-width="1"/></svg>
<span class="t" style="left:4.6px;top:175.9px;font-size:13px;line-height:17px;color:#6a6a6a;transform:scaleX(0.917);">Offset edge width</span>
<span class="t" style="left:193.9px;top:175.3px;font-size:14.5px;line-height:19px;color:#333;transform:scaleX(0.909);">0.25 in</span>
<i class="ul" style="left:102.1px;top:194.4px;width:134.5px"></i>
<span class="t" style="left:5.3px;top:198.4px;font-size:15px;line-height:20px;color:#333;transform:scaleX(0.915);">Convex (Automatic)</span>
<svg class="ic" style="left:222.5px;top:205.5px" width="9" height="5" viewBox="0 0 9 5"><path d="M0 0h9L4.500 5z" fill="#222"/></svg>
<i class="ul" style="left:1px;top:220px;width:235.6px"></i>
<span class="abs" style="left:4px;top:231px;width:12px;height:12px;background:#1b5aae;border-radius:2px"></span>
<svg class="ic" style="left:5.5px;top:233.0px" width="9" height="8" viewBox="0 0 9 8"><path d="M1 4l2.500 2.500L8 1.500" fill="none" stroke="#fff" stroke-width="1.700"/></svg>
<span class="t" style="left:19.5px;top:227.9px;font-size:14.5px;line-height:19px;color:#555;transform:scaleX(0.992);">Fillet</span>
<span class="t" style="left:4.6px;top:256.8px;font-size:13px;line-height:17px;color:#6a6a6a;transform:scaleX(0.912);">Inner Fillet Radius</span>
<span class="t" style="left:193.9px;top:256.0px;font-size:14.5px;line-height:19px;color:#333;transform:scaleX(0.909);">0.25 in</span>
<i class="ul" style="left:106px;top:275.6px;width:130.6px"></i>
<span class="t" style="left:4.6px;top:282.7px;font-size:13px;line-height:17px;color:#6a6a6a;transform:scaleX(0.914);">Outer Fillet Radius</span>
<span class="t" style="left:193.9px;top:282.2px;font-size:14.5px;line-height:19px;color:#333;transform:scaleX(0.909);">0.25 in</span>
<i class="ul" style="left:108.6px;top:301.5px;width:128px"></i>
<div class="abs" style="left:3px;top:307.4px;width:257px;height:25px;border:1px solid #d6d6d6;border-radius:3px"></div>
<span class="t" style="left:9.6px;top:312.4px;font-size:13px;line-height:17px;color:#555;transform:scaleX(0.894);">Bounding Faces</span>
<span class="t" style="left:5.4px;top:341.2px;font-size:15px;line-height:20px;color:#333;transform:scaleX(0.930);">Offset From Centerline</span>
<svg class="ic" style="left:222.3px;top:348.5px" width="9" height="5" viewBox="0 0 9 5"><path d="M0 0h9L4.500 5z" fill="#222"/></svg>
<i class="ul" style="left:1px;top:363.4px;width:236.3px"></i>
<span class="abs" style="left:4px;top:374.5px;width:11.500px;height:11.500px;border:1px solid #ddd;border-radius:2px;background:#fff"></span>
<span class="t" style="left:19.7px;top:371.2px;font-size:14px;line-height:18px;color:#7a7a7a;transform:scaleX(0.925);">Guess missing holes</span>
<span class="t" style="left:5.4px;top:397.2px;font-size:15px;line-height:20px;color:#333;transform:scaleX(0.951);">6061 Aluminum</span>
<svg class="ic" style="left:222.3px;top:403.8px" width="9" height="5" viewBox="0 0 9 5"><path d="M0 0h9L4.500 5z" fill="#222"/></svg>
<i class="ul" style="left:1px;top:419.6px;width:236.3px"></i>
<i class="abs" style="left:7px;top:435.2px;width:112px;height:1.500px;background:#555"></i>
<span class="abs" style="left:78.6px;top:430.4px;width:11px;height:11px;border:1px solid #666;border-radius:50%;background:#fff"></span>
</div>
<div class="abs" style="left:245px;top:480px;width:18px;height:32px;background:#fff"></div>
<svg class="ic" style="left:251.0px;top:487.0px" width="12" height="20" viewBox="0 0 12 20"><path d="M1 2l2.500 2.500L6 2" fill="none" stroke="#222" stroke-width="1.300"/><path d="M6.500 5.500v13" stroke="#222" stroke-width="1.500"/><path d="M8 8.500h4M8 13h4M8 17.500h4M9 3.500h3" stroke="#222" stroke-width="1.300"/></svg>
<div id="rightbar">
<div class="abs" style="left:0;top:0;width:33px;height:133px;background:#fff;border:1px solid #d0d0d0"></div>
<i class="abs" style="left:0;top:33.2px;width:32px;height:1px;background:#d0d0d0"></i>
<i class="abs" style="left:0;top:66.2px;width:32px;height:1px;background:#d0d0d0"></i>
<i class="abs" style="left:0;top:99.3px;width:32px;height:1px;background:#d0d0d0"></i>
<div class="abs" style="left:0;top:143px;width:33px;height:67px;background:#fff;border:1px solid #d0d0d0"></div>
<i class="abs" style="left:0;top:176.500px;width:32px;height:1px;background:#d0d0d0"></i>
<svg class="ic" style="left:7.0px;top:6.0px" width="21" height="21" viewBox="0 0 21 21"><path d="M2 13l6-9 5-2 4 3 2 6v7H2z" fill="#aaa"/><path d="M8 4l3 9M13 2l0 11M17 5l-3 8" stroke="#888" stroke-width="1"/><rect x="1.500" y="13" width="18" height="6" rx="1" fill="#ddd" stroke="#777" stroke-width="1"/><path d="M7.500 13v6M13.500 13v6" stroke="#777"/><circle cx="4.500" cy="16" r="1" fill="#444"/></svg>
<svg class="ic" style="left:7.0px;top:39.0px" width="22" height="22" viewBox="0 0 22 22"><path d="M1 1h10v8H1z" fill="#2e6bc4"/><path d="M1 3.700h10M1 6.300h10M4.300 1v8M7.700 1v8" stroke="#fff" stroke-width=".9"/><path d="M7 11l7-3 6 3v7l-6 3.500-7-3.500z" fill="#fff" stroke="#333" stroke-width="1.300" stroke-linejoin="round"/><path d="M7 11l7 3 6-3M14 14v7.500" fill="none" stroke="#333" stroke-width="1.300"/></svg>
<svg class="ic" style="left:7.0px;top:72.0px" width="22" height="22" viewBox="0 0 22 22"><path d="M1 1h9v8H1z" fill="#333"/><path d="M1 3.700h9M1 6.300h9M4 1v8M7 1v8" stroke="#fff" stroke-width=".9"/><path d="M6 12l6-2.500 5 2.500v5.500l-5 3-6-3z" fill="#ccc" stroke="#333" stroke-width="1.100" stroke-linejoin="round"/><path d="M4.500 9.500c-2 1-2 3-1 4.500-1 1.500-1 4 1 5M19 9.500c2 1 2 3 1 4.500 1 1.500 1 4-1 5" fill="none" stroke="#333" stroke-width="1.200"/></svg>
<svg class="ic" style="left:7.0px;top:105.0px" width="22" height="22" viewBox="0 0 22 22"><path d="M1 1h9v8H1z" fill="#333"/><path d="M1 3.700h9M1 6.300h9M4 1v8M7 1v8" stroke="#fff" stroke-width=".9"/><path d="M4 9.500c-3 3-3 8 0 11.500M18 9.500c3 3 3 8 0 11.500" fill="none" stroke="#222" stroke-width="1.700"/><path d="M7 12c3 0 5 8 9 8M16 11.500c-3 0-6 9-9 8.500" fill="none" stroke="#222" stroke-width="2"/></svg>
<svg class="ic" style="left:5.0px;top:148.0px" width="24" height="24" viewBox="0 0 24 24"><rect x=".5" y=".5" width="23" height="23" rx="3.500" fill="#d8d8d8"/><path d="M12 12L5 5a10 10 0 0 1 14 0z" fill="#62c24a"/><path d="M12 12l7-7a10 10 0 0 1 0 14z" fill="#5cb8e8"/><path d="M12 12l7 7a10 10 0 0 1-14 0z" fill="#f2b632"/><path d="M12 12l-7 7a10 10 0 0 1 0-14z" fill="#e0453a"/></svg>
<span class="abs" style="left:5.500px;top:182px;width:23px;height:23px;background:#1a56c4;border:1.500px solid #0d1b3a"></span>
<span class="t" style="left:7.6px;top:186.2px;font-size:14.5px;line-height:19px;color:#fff;font-weight:700;transform:scaleX(0.754);font-family:'Liberation Serif',serif;">MK</span>
</div>
<svg class="ic" style="left:1889.0px;top:912.0px" width="22" height="15" viewBox="0 0 22 15"><path d="M1.500 13.500c0-7 4-11.500 9.500-11.500s9.500 4.500 9.500 11.500z" fill="#ddd" stroke="#222" stroke-width="1.400" stroke-linejoin="round"/><path d="M5.500 13.500c0-4 2-6.500 5.500-6.500s5.500 2.500 5.500 6.500" fill="#fff" stroke="#222" stroke-width="1.300"/><path d="M7 10.500l4 2 4-2" fill="none" stroke="#222" stroke-width="1"/></svg>
<footer id="tabs">
<svg class="ic" style="left:7.0px;top:6.0px" width="18" height="18" viewBox="0 0 18 18"><path d="M9 1v16M1 9h16" stroke="#444" stroke-width="2.600"/></svg>
<svg class="ic" style="left:34.0px;top:0.0px" width="160" height="30" viewBox="0 0 160 30"><path d="M2 1h32l9 14-9 14H2q-2 0-2-2V3q0-2 2-2z" fill="#e3e3e3"/><path d="M36 1h108l10 14-10 14H36l9-14z" fill="#fff"/><path d="M18 6l9.500 8.500h-2.500v8.500h-5v-6h-4v6h-5v-8.500H8.500z" fill="#555"/><path d="M23 7v3.500l2.500 2V7z" fill="#555"/></svg>
<svg class="ic" style="left:86.0px;top:5.0px" width="18" height="15" viewBox="0 0 18 15"><path d="M1 2.500q0-1.500 1.500-1.500h4l1.500 2h8q1 0 1 1v9q0 1-1 1H2q-1 0-1-1z" fill="none" stroke="#444" stroke-width="1.200"/></svg>
<span class="t" style="left:109.1px;top:3.5px;font-size:14.5px;line-height:19px;color:#666;transform:scaleX(0.989);">Drivetrain</span>
<div class="abs" style="left:194px;top:2px;width:198px;height:28px;background:#e6e6e6;border-radius:3px 3px 0 0"></div>
<svg class="ic" style="left:206.0px;top:6.5px" width="13" height="13" viewBox="0 0 13 13"><circle cx="6.500" cy="6.500" r="6" fill="#4a86d8" stroke="#2a5fb0" stroke-width="1"/><path d="M6.500 2.500v7M3.500 6.500l3 3.500 3-3.500" fill="none" stroke="#fff" stroke-width="1.700"/></svg>
<svg class="ic" style="left:224.0px;top:5.0px" width="18" height="17" viewBox="0 0 18 17"><path d="M1 3l3-2h9l4 3v10l-3 2.500H5L1 14z" fill="#fff" stroke="#222" stroke-width="1.100" stroke-linejoin="round"/><rect x="5" y="5" width="9" height="9.500" fill="#888" stroke="#222" stroke-width="1"/><path d="M1 3l4 2M14 5l3-1" stroke="#222"/></svg>
<span class="t" style="left:244.6px;top:5.0px;font-size:14.5px;line-height:19px;color:#666;transform:scaleX(0.986);">Drivetrain Assembly</span>
<div class="abs" style="left:396px;top:0;width:198px;height:30px;background:#fff;border-bottom:2.500px solid #1b5aae;border-radius:0 0 3px 3px"></div>
<svg class="ic" style="left:406.0px;top:4.0px" width="18" height="18" viewBox="0 0 18 18"><path d="M1.500 5l3-2.500h3L9 4v11.500l-1.500 1.500h-6z" fill="#fff" stroke="#222" stroke-width="1.200" stroke-linejoin="round"/><path d="M9.500 16V3l2-2h4l1.500 1.500V15l-1.500 1.500z" fill="#fff" stroke="#222" stroke-width="1.200" stroke-linejoin="round"/></svg>
<span class="t" style="left:426.6px;top:5.0px;font-size:14.5px;line-height:19px;color:#444;transform:scaleX(0.997);">Drivetrain</span>
</footer>
</div></body></html>
